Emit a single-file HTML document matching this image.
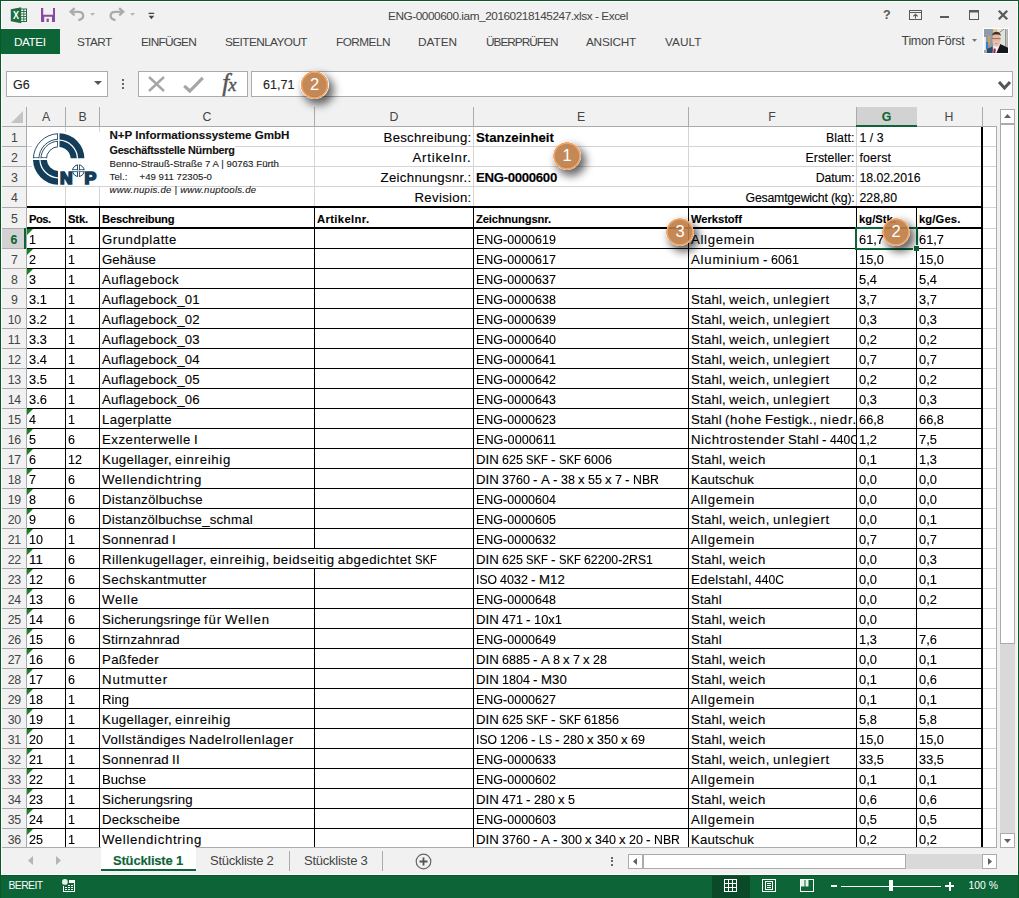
<!DOCTYPE html>
<html lang="de"><head><meta charset="utf-8"><title>ENG-0000600.iam_20160218145247.xlsx - Excel</title>
<style>
html,body{margin:0;padding:0;}
body{width:1019px;height:898px;overflow:hidden;background:#f1f1f1;font-family:"Liberation Sans",sans-serif;color:#000;position:relative;}
.t{position:absolute;white-space:nowrap;-webkit-text-stroke:0.12px currentColor;}
.r{position:absolute;}
.sx{display:inline-block;transform-origin:0 50%;}
.ui{color:#444;-webkit-text-stroke:0;}
svg{position:absolute;overflow:visible;}
</style></head><body>

<!-- sheet -->
<div class="r " style="left:27px;top:127px;width:970px;height:721px;background:#fff;"></div>
<div class="r " style="left:27px;top:146px;width:970px;height:1px;background:#d4d4d4;"></div>
<div class="r " style="left:27px;top:166px;width:970px;height:1px;background:#d4d4d4;"></div>
<div class="r " style="left:27px;top:186px;width:970px;height:1px;background:#d4d4d4;"></div>
<div class="r " style="left:983px;top:207px;width:14px;height:1px;background:#d4d4d4;"></div>
<div class="r " style="left:983px;top:228px;width:14px;height:1px;background:#d4d4d4;"></div>
<div class="r " style="left:983px;top:248px;width:14px;height:1px;background:#d4d4d4;"></div>
<div class="r " style="left:983px;top:268px;width:14px;height:1px;background:#d4d4d4;"></div>
<div class="r " style="left:983px;top:288px;width:14px;height:1px;background:#d4d4d4;"></div>
<div class="r " style="left:983px;top:308px;width:14px;height:1px;background:#d4d4d4;"></div>
<div class="r " style="left:983px;top:328px;width:14px;height:1px;background:#d4d4d4;"></div>
<div class="r " style="left:983px;top:348px;width:14px;height:1px;background:#d4d4d4;"></div>
<div class="r " style="left:983px;top:368px;width:14px;height:1px;background:#d4d4d4;"></div>
<div class="r " style="left:983px;top:388px;width:14px;height:1px;background:#d4d4d4;"></div>
<div class="r " style="left:983px;top:408px;width:14px;height:1px;background:#d4d4d4;"></div>
<div class="r " style="left:983px;top:428px;width:14px;height:1px;background:#d4d4d4;"></div>
<div class="r " style="left:983px;top:448px;width:14px;height:1px;background:#d4d4d4;"></div>
<div class="r " style="left:983px;top:468px;width:14px;height:1px;background:#d4d4d4;"></div>
<div class="r " style="left:983px;top:488px;width:14px;height:1px;background:#d4d4d4;"></div>
<div class="r " style="left:983px;top:508px;width:14px;height:1px;background:#d4d4d4;"></div>
<div class="r " style="left:983px;top:528px;width:14px;height:1px;background:#d4d4d4;"></div>
<div class="r " style="left:983px;top:548px;width:14px;height:1px;background:#d4d4d4;"></div>
<div class="r " style="left:983px;top:568px;width:14px;height:1px;background:#d4d4d4;"></div>
<div class="r " style="left:983px;top:588px;width:14px;height:1px;background:#d4d4d4;"></div>
<div class="r " style="left:983px;top:608px;width:14px;height:1px;background:#d4d4d4;"></div>
<div class="r " style="left:983px;top:628px;width:14px;height:1px;background:#d4d4d4;"></div>
<div class="r " style="left:983px;top:648px;width:14px;height:1px;background:#d4d4d4;"></div>
<div class="r " style="left:983px;top:668px;width:14px;height:1px;background:#d4d4d4;"></div>
<div class="r " style="left:983px;top:688px;width:14px;height:1px;background:#d4d4d4;"></div>
<div class="r " style="left:983px;top:708px;width:14px;height:1px;background:#d4d4d4;"></div>
<div class="r " style="left:983px;top:728px;width:14px;height:1px;background:#d4d4d4;"></div>
<div class="r " style="left:983px;top:748px;width:14px;height:1px;background:#d4d4d4;"></div>
<div class="r " style="left:983px;top:768px;width:14px;height:1px;background:#d4d4d4;"></div>
<div class="r " style="left:983px;top:788px;width:14px;height:1px;background:#d4d4d4;"></div>
<div class="r " style="left:983px;top:808px;width:14px;height:1px;background:#d4d4d4;"></div>
<div class="r " style="left:983px;top:828px;width:14px;height:1px;background:#d4d4d4;"></div>
<div class="r " style="left:983px;top:848px;width:14px;height:1px;background:#d4d4d4;"></div>
<div class="r " style="left:65px;top:127px;width:1px;height:80px;background:#d4d4d4;"></div>
<div class="r " style="left:99px;top:127px;width:1px;height:80px;background:#d4d4d4;"></div>
<div class="r " style="left:314px;top:127px;width:1px;height:80px;background:#d4d4d4;"></div>
<div class="r " style="left:473px;top:127px;width:1px;height:80px;background:#d4d4d4;"></div>
<div class="r " style="left:688px;top:127px;width:1px;height:80px;background:#d4d4d4;"></div>
<div class="r " style="left:856px;top:127px;width:1px;height:80px;background:#d4d4d4;"></div>
<div class="r " style="left:996px;top:127px;width:1px;height:721px;background:#ababab;"></div>
<div class="r " style="left:32px;top:132px;width:68px;height:54px;background:#fff;"></div>
<div class="r " style="left:100px;top:128px;width:135px;height:58px;background:#fff;"></div>
<div class="r " style="left:100px;top:160px;width:117px;height:26px;background:#fff;"></div>
<div class="r " style="left:27px;top:206px;width:956px;height:2px;background:#000;"></div>
<div class="r " style="left:27px;top:227px;width:956px;height:2px;background:#000;"></div>
<div class="r " style="left:27px;top:248px;width:955px;height:1px;background:#000;"></div>
<div class="r " style="left:27px;top:268px;width:955px;height:1px;background:#000;"></div>
<div class="r " style="left:27px;top:288px;width:955px;height:1px;background:#000;"></div>
<div class="r " style="left:27px;top:308px;width:955px;height:1px;background:#000;"></div>
<div class="r " style="left:27px;top:328px;width:955px;height:1px;background:#000;"></div>
<div class="r " style="left:27px;top:348px;width:955px;height:1px;background:#000;"></div>
<div class="r " style="left:27px;top:368px;width:955px;height:1px;background:#000;"></div>
<div class="r " style="left:27px;top:388px;width:955px;height:1px;background:#000;"></div>
<div class="r " style="left:27px;top:408px;width:955px;height:1px;background:#000;"></div>
<div class="r " style="left:27px;top:428px;width:955px;height:1px;background:#000;"></div>
<div class="r " style="left:27px;top:448px;width:955px;height:1px;background:#000;"></div>
<div class="r " style="left:27px;top:468px;width:955px;height:1px;background:#000;"></div>
<div class="r " style="left:27px;top:488px;width:955px;height:1px;background:#000;"></div>
<div class="r " style="left:27px;top:508px;width:955px;height:1px;background:#000;"></div>
<div class="r " style="left:27px;top:528px;width:955px;height:1px;background:#000;"></div>
<div class="r " style="left:27px;top:548px;width:955px;height:1px;background:#000;"></div>
<div class="r " style="left:27px;top:568px;width:955px;height:1px;background:#000;"></div>
<div class="r " style="left:27px;top:588px;width:955px;height:1px;background:#000;"></div>
<div class="r " style="left:27px;top:608px;width:955px;height:1px;background:#000;"></div>
<div class="r " style="left:27px;top:628px;width:955px;height:1px;background:#000;"></div>
<div class="r " style="left:27px;top:648px;width:955px;height:1px;background:#000;"></div>
<div class="r " style="left:27px;top:668px;width:955px;height:1px;background:#000;"></div>
<div class="r " style="left:27px;top:688px;width:955px;height:1px;background:#000;"></div>
<div class="r " style="left:27px;top:708px;width:955px;height:1px;background:#000;"></div>
<div class="r " style="left:27px;top:728px;width:955px;height:1px;background:#000;"></div>
<div class="r " style="left:27px;top:748px;width:955px;height:1px;background:#000;"></div>
<div class="r " style="left:27px;top:768px;width:955px;height:1px;background:#000;"></div>
<div class="r " style="left:27px;top:788px;width:955px;height:1px;background:#000;"></div>
<div class="r " style="left:27px;top:808px;width:955px;height:1px;background:#000;"></div>
<div class="r " style="left:27px;top:828px;width:955px;height:1px;background:#000;"></div>
<div class="r " style="left:27px;top:848px;width:955px;height:1px;background:#000;"></div>
<div class="r " style="left:65px;top:207px;width:1px;height:641px;background:#000;"></div>
<div class="r " style="left:99px;top:207px;width:1px;height:641px;background:#000;"></div>
<div class="r " style="left:314px;top:207px;width:1px;height:641px;background:#000;"></div>
<div class="r " style="left:473px;top:207px;width:1px;height:641px;background:#000;"></div>
<div class="r " style="left:688px;top:207px;width:1px;height:641px;background:#000;"></div>
<div class="r " style="left:856px;top:207px;width:1px;height:641px;background:#000;"></div>
<div class="r " style="left:916px;top:207px;width:1px;height:641px;background:#000;"></div>
<div class="r " style="left:981px;top:127px;width:2px;height:721px;background:#000;"></div>
<div class="r " style="left:314px;top:549px;width:1px;height:19px;background:#fff;"></div>
<!-- cells -->
<div class="t" style="left:29px;top:232.23px;font-size:13.2px;line-height:16px;"><span class="sx" style="transform:scaleX(0.9535);margin-right:-0.341px">1</span></div>
<div class="t" style="left:68px;top:232.23px;font-size:13.2px;line-height:16px;"><span class="sx" style="transform:scaleX(0.9535);margin-right:-0.341px">1</span></div>
<div class="t" style="left:102px;top:232.23px;font-size:13.2px;line-height:16px;"><span style="letter-spacing:0.547px">Grundplatte</span></div>
<div class="t" style="left:476px;top:232.23px;font-size:13.2px;line-height:16px;"><span class="sx" style="transform:scaleX(0.948);margin-right:-4.391px">ENG-0000619</span></div>
<div class="t" style="left:691px;top:232.23px;font-size:13.2px;line-height:16px;"><span style="letter-spacing:0.67px">Allgemein</span></div>
<div class="t" style="left:859px;top:232.23px;font-size:13.2px;line-height:16px;"><span class="sx" style="transform:scaleX(0.9731);margin-right:-0.692px">61,7</span></div>
<div class="t" style="left:919px;top:232.23px;font-size:13.2px;line-height:16px;"><span class="sx" style="transform:scaleX(0.9731);margin-right:-0.692px">61,7</span></div>
<svg style="left:27px;top:229px" width="6" height="6"><path d="M0 0H6L0 6Z" fill="#0f8a1f"/></svg>
<div class="t" style="left:29px;top:252.23px;font-size:13.2px;line-height:16px;"><span class="sx" style="transform:scaleX(0.9535);margin-right:-0.341px">2</span></div>
<div class="t" style="left:68px;top:252.23px;font-size:13.2px;line-height:16px;"><span class="sx" style="transform:scaleX(0.9535);margin-right:-0.341px">1</span></div>
<div class="t" style="left:102px;top:252.23px;font-size:13.2px;line-height:16px;"><span style="letter-spacing:0.061px">Gehäuse</span></div>
<div class="t" style="left:476px;top:252.23px;font-size:13.2px;line-height:16px;"><span class="sx" style="transform:scaleX(0.948);margin-right:-4.391px">ENG-0000617</span></div>
<div class="t" style="left:691px;top:252.23px;font-size:13.2px;line-height:16px;"><span style="letter-spacing:0.82px">Aluminium</span><span style="letter-spacing:-0.667px"> </span><span style="letter-spacing:0.604px">-</span><span style="letter-spacing:-0.667px"> </span><span class="sx" style="transform:scaleX(0.9535);margin-right:-1.366px">6061</span></div>
<div class="t" style="left:859px;top:252.23px;font-size:13.2px;line-height:16px;"><span class="sx" style="transform:scaleX(0.9731);margin-right:-0.692px">15,0</span></div>
<div class="t" style="left:919px;top:252.23px;font-size:13.2px;line-height:16px;"><span class="sx" style="transform:scaleX(0.9731);margin-right:-0.692px">15,0</span></div>
<svg style="left:27px;top:249px" width="6" height="6"><path d="M0 0H6L0 6Z" fill="#0f8a1f"/></svg>
<div class="t" style="left:29px;top:272.23px;font-size:13.2px;line-height:16px;"><span class="sx" style="transform:scaleX(0.9535);margin-right:-0.341px">3</span></div>
<div class="t" style="left:68px;top:272.23px;font-size:13.2px;line-height:16px;"><span class="sx" style="transform:scaleX(0.9535);margin-right:-0.341px">1</span></div>
<div class="t" style="left:102px;top:272.23px;font-size:13.2px;line-height:16px;"><span style="letter-spacing:0.395px">Auflagebock</span></div>
<div class="t" style="left:476px;top:272.23px;font-size:13.2px;line-height:16px;"><span class="sx" style="transform:scaleX(0.948);margin-right:-4.391px">ENG-0000637</span></div>
<div class="t" style="left:859px;top:272.23px;font-size:13.2px;line-height:16px;"><span class="sx" style="transform:scaleX(0.9809);margin-right:-0.35px">5,4</span></div>
<div class="t" style="left:919px;top:272.23px;font-size:13.2px;line-height:16px;"><span class="sx" style="transform:scaleX(0.9809);margin-right:-0.35px">5,4</span></div>
<svg style="left:27px;top:269px" width="6" height="6"><path d="M0 0H6L0 6Z" fill="#0f8a1f"/></svg>
<div class="t" style="left:29px;top:292.23px;font-size:13.2px;line-height:16px;"><span class="sx" style="transform:scaleX(0.9809);margin-right:-0.35px">3.1</span></div>
<div class="t" style="left:68px;top:292.23px;font-size:13.2px;line-height:16px;"><span class="sx" style="transform:scaleX(0.9535);margin-right:-0.341px">1</span></div>
<div class="t" style="left:102px;top:292.23px;font-size:13.2px;line-height:16px;"><span style="letter-spacing:0.237px">Auflagebock_01</span></div>
<div class="t" style="left:476px;top:292.23px;font-size:13.2px;line-height:16px;"><span class="sx" style="transform:scaleX(0.948);margin-right:-4.391px">ENG-0000638</span></div>
<div class="t" style="left:691px;top:292.23px;font-size:13.2px;line-height:16px;"><span style="letter-spacing:0.208px">Stahl,</span><span style="letter-spacing:-0.667px"> </span><span style="letter-spacing:0.597px">weich,</span><span style="letter-spacing:-0.667px"> </span><span style="letter-spacing:0.707px">unlegiert</span></div>
<div class="t" style="left:859px;top:292.23px;font-size:13.2px;line-height:16px;"><span class="sx" style="transform:scaleX(0.9809);margin-right:-0.35px">3,7</span></div>
<div class="t" style="left:919px;top:292.23px;font-size:13.2px;line-height:16px;"><span class="sx" style="transform:scaleX(0.9809);margin-right:-0.35px">3,7</span></div>
<div class="t" style="left:29px;top:312.23px;font-size:13.2px;line-height:16px;"><span class="sx" style="transform:scaleX(0.9809);margin-right:-0.35px">3.2</span></div>
<div class="t" style="left:68px;top:312.23px;font-size:13.2px;line-height:16px;"><span class="sx" style="transform:scaleX(0.9535);margin-right:-0.341px">1</span></div>
<div class="t" style="left:102px;top:312.23px;font-size:13.2px;line-height:16px;"><span style="letter-spacing:0.237px">Auflagebock_02</span></div>
<div class="t" style="left:476px;top:312.23px;font-size:13.2px;line-height:16px;"><span class="sx" style="transform:scaleX(0.948);margin-right:-4.391px">ENG-0000639</span></div>
<div class="t" style="left:691px;top:312.23px;font-size:13.2px;line-height:16px;"><span style="letter-spacing:0.208px">Stahl,</span><span style="letter-spacing:-0.667px"> </span><span style="letter-spacing:0.597px">weich,</span><span style="letter-spacing:-0.667px"> </span><span style="letter-spacing:0.707px">unlegiert</span></div>
<div class="t" style="left:859px;top:312.23px;font-size:13.2px;line-height:16px;"><span class="sx" style="transform:scaleX(0.9809);margin-right:-0.35px">0,3</span></div>
<div class="t" style="left:919px;top:312.23px;font-size:13.2px;line-height:16px;"><span class="sx" style="transform:scaleX(0.9809);margin-right:-0.35px">0,3</span></div>
<div class="t" style="left:29px;top:332.23px;font-size:13.2px;line-height:16px;"><span class="sx" style="transform:scaleX(0.9809);margin-right:-0.35px">3.3</span></div>
<div class="t" style="left:68px;top:332.23px;font-size:13.2px;line-height:16px;"><span class="sx" style="transform:scaleX(0.9535);margin-right:-0.341px">1</span></div>
<div class="t" style="left:102px;top:332.23px;font-size:13.2px;line-height:16px;"><span style="letter-spacing:0.237px">Auflagebock_03</span></div>
<div class="t" style="left:476px;top:332.23px;font-size:13.2px;line-height:16px;"><span class="sx" style="transform:scaleX(0.948);margin-right:-4.391px">ENG-0000640</span></div>
<div class="t" style="left:691px;top:332.23px;font-size:13.2px;line-height:16px;"><span style="letter-spacing:0.208px">Stahl,</span><span style="letter-spacing:-0.667px"> </span><span style="letter-spacing:0.597px">weich,</span><span style="letter-spacing:-0.667px"> </span><span style="letter-spacing:0.707px">unlegiert</span></div>
<div class="t" style="left:859px;top:332.23px;font-size:13.2px;line-height:16px;"><span class="sx" style="transform:scaleX(0.9809);margin-right:-0.35px">0,2</span></div>
<div class="t" style="left:919px;top:332.23px;font-size:13.2px;line-height:16px;"><span class="sx" style="transform:scaleX(0.9809);margin-right:-0.35px">0,2</span></div>
<div class="t" style="left:29px;top:352.23px;font-size:13.2px;line-height:16px;"><span class="sx" style="transform:scaleX(0.9809);margin-right:-0.35px">3.4</span></div>
<div class="t" style="left:68px;top:352.23px;font-size:13.2px;line-height:16px;"><span class="sx" style="transform:scaleX(0.9535);margin-right:-0.341px">1</span></div>
<div class="t" style="left:102px;top:352.23px;font-size:13.2px;line-height:16px;"><span style="letter-spacing:0.237px">Auflagebock_04</span></div>
<div class="t" style="left:476px;top:352.23px;font-size:13.2px;line-height:16px;"><span class="sx" style="transform:scaleX(0.948);margin-right:-4.391px">ENG-0000641</span></div>
<div class="t" style="left:691px;top:352.23px;font-size:13.2px;line-height:16px;"><span style="letter-spacing:0.208px">Stahl,</span><span style="letter-spacing:-0.667px"> </span><span style="letter-spacing:0.597px">weich,</span><span style="letter-spacing:-0.667px"> </span><span style="letter-spacing:0.707px">unlegiert</span></div>
<div class="t" style="left:859px;top:352.23px;font-size:13.2px;line-height:16px;"><span class="sx" style="transform:scaleX(0.9809);margin-right:-0.35px">0,7</span></div>
<div class="t" style="left:919px;top:352.23px;font-size:13.2px;line-height:16px;"><span class="sx" style="transform:scaleX(0.9809);margin-right:-0.35px">0,7</span></div>
<div class="t" style="left:29px;top:372.23px;font-size:13.2px;line-height:16px;"><span class="sx" style="transform:scaleX(0.9809);margin-right:-0.35px">3.5</span></div>
<div class="t" style="left:68px;top:372.23px;font-size:13.2px;line-height:16px;"><span class="sx" style="transform:scaleX(0.9535);margin-right:-0.341px">1</span></div>
<div class="t" style="left:102px;top:372.23px;font-size:13.2px;line-height:16px;"><span style="letter-spacing:0.237px">Auflagebock_05</span></div>
<div class="t" style="left:476px;top:372.23px;font-size:13.2px;line-height:16px;"><span class="sx" style="transform:scaleX(0.948);margin-right:-4.391px">ENG-0000642</span></div>
<div class="t" style="left:691px;top:372.23px;font-size:13.2px;line-height:16px;"><span style="letter-spacing:0.208px">Stahl,</span><span style="letter-spacing:-0.667px"> </span><span style="letter-spacing:0.597px">weich,</span><span style="letter-spacing:-0.667px"> </span><span style="letter-spacing:0.707px">unlegiert</span></div>
<div class="t" style="left:859px;top:372.23px;font-size:13.2px;line-height:16px;"><span class="sx" style="transform:scaleX(0.9809);margin-right:-0.35px">0,2</span></div>
<div class="t" style="left:919px;top:372.23px;font-size:13.2px;line-height:16px;"><span class="sx" style="transform:scaleX(0.9809);margin-right:-0.35px">0,2</span></div>
<div class="t" style="left:29px;top:392.23px;font-size:13.2px;line-height:16px;"><span class="sx" style="transform:scaleX(0.9809);margin-right:-0.35px">3.6</span></div>
<div class="t" style="left:68px;top:392.23px;font-size:13.2px;line-height:16px;"><span class="sx" style="transform:scaleX(0.9535);margin-right:-0.341px">1</span></div>
<div class="t" style="left:102px;top:392.23px;font-size:13.2px;line-height:16px;"><span style="letter-spacing:0.237px">Auflagebock_06</span></div>
<div class="t" style="left:476px;top:392.23px;font-size:13.2px;line-height:16px;"><span class="sx" style="transform:scaleX(0.948);margin-right:-4.391px">ENG-0000643</span></div>
<div class="t" style="left:691px;top:392.23px;font-size:13.2px;line-height:16px;"><span style="letter-spacing:0.208px">Stahl,</span><span style="letter-spacing:-0.667px"> </span><span style="letter-spacing:0.597px">weich,</span><span style="letter-spacing:-0.667px"> </span><span style="letter-spacing:0.707px">unlegiert</span></div>
<div class="t" style="left:859px;top:392.23px;font-size:13.2px;line-height:16px;"><span class="sx" style="transform:scaleX(0.9809);margin-right:-0.35px">0,3</span></div>
<div class="t" style="left:919px;top:392.23px;font-size:13.2px;line-height:16px;"><span class="sx" style="transform:scaleX(0.9809);margin-right:-0.35px">0,3</span></div>
<div class="t" style="left:29px;top:412.23px;font-size:13.2px;line-height:16px;"><span class="sx" style="transform:scaleX(0.9535);margin-right:-0.341px">4</span></div>
<div class="t" style="left:68px;top:412.23px;font-size:13.2px;line-height:16px;"><span class="sx" style="transform:scaleX(0.9535);margin-right:-0.341px">1</span></div>
<div class="t" style="left:102px;top:412.23px;font-size:13.2px;line-height:16px;"><span style="letter-spacing:0.359px">Lagerplatte</span></div>
<div class="t" style="left:476px;top:412.23px;font-size:13.2px;line-height:16px;"><span class="sx" style="transform:scaleX(0.948);margin-right:-4.391px">ENG-0000623</span></div>
<div class="t" style="left:691px;top:412.23px;font-size:13.2px;line-height:16px;width:165px;overflow:hidden;"><span style="letter-spacing:0.182px">Stahl</span><span style="letter-spacing:-0.667px"> </span><span style="letter-spacing:0.648px">(hohe</span><span style="letter-spacing:-0.667px"> </span><span style="letter-spacing:0.235px">Festigk.,</span><span style="letter-spacing:-0.667px"> </span><span style="letter-spacing:0.785px">niedr.</span></div>
<div class="t" style="left:859px;top:412.23px;font-size:13.2px;line-height:16px;"><span class="sx" style="transform:scaleX(0.9731);margin-right:-0.692px">66,8</span></div>
<div class="t" style="left:919px;top:412.23px;font-size:13.2px;line-height:16px;"><span class="sx" style="transform:scaleX(0.9731);margin-right:-0.692px">66,8</span></div>
<svg style="left:27px;top:409px" width="6" height="6"><path d="M0 0H6L0 6Z" fill="#0f8a1f"/></svg>
<div class="t" style="left:29px;top:432.23px;font-size:13.2px;line-height:16px;"><span class="sx" style="transform:scaleX(0.9535);margin-right:-0.341px">5</span></div>
<div class="t" style="left:68px;top:432.23px;font-size:13.2px;line-height:16px;"><span class="sx" style="transform:scaleX(0.9535);margin-right:-0.341px">6</span></div>
<div class="t" style="left:102px;top:432.23px;font-size:13.2px;line-height:16px;"><span style="letter-spacing:0.525px">Exzenterwelle</span><span style="letter-spacing:-0.667px"> </span><span style="letter-spacing:0.333px">I</span></div>
<div class="t" style="left:476px;top:432.23px;font-size:13.2px;line-height:16px;"><span class="sx" style="transform:scaleX(0.9591);margin-right:-3.412px">ENG-0000611</span></div>
<div class="t" style="left:691px;top:432.23px;font-size:13.2px;line-height:16px;width:165px;overflow:hidden;"><span style="letter-spacing:0.583px">Nichtrostender</span><span style="letter-spacing:-0.667px"> </span><span style="letter-spacing:0.182px">Stahl</span><span style="letter-spacing:-0.667px"> </span><span style="letter-spacing:0.604px">-</span><span style="letter-spacing:-0.667px"> </span><span class="sx" style="transform:scaleX(0.919);margin-right:-2.557px">440C</span></div>
<div class="t" style="left:859px;top:432.23px;font-size:13.2px;line-height:16px;"><span class="sx" style="transform:scaleX(0.9809);margin-right:-0.35px">1,2</span></div>
<div class="t" style="left:919px;top:432.23px;font-size:13.2px;line-height:16px;"><span class="sx" style="transform:scaleX(0.9809);margin-right:-0.35px">7,5</span></div>
<svg style="left:27px;top:429px" width="6" height="6"><path d="M0 0H6L0 6Z" fill="#0f8a1f"/></svg>
<div class="t" style="left:29px;top:452.23px;font-size:13.2px;line-height:16px;"><span class="sx" style="transform:scaleX(0.9535);margin-right:-0.341px">6</span></div>
<div class="t" style="left:68px;top:452.23px;font-size:13.2px;line-height:16px;"><span class="sx" style="transform:scaleX(0.9535);margin-right:-0.683px">12</span></div>
<div class="t" style="left:102px;top:452.23px;font-size:13.2px;line-height:16px;"><span style="letter-spacing:0.359px">Kugellager,</span><span style="letter-spacing:-0.667px"> </span><span style="letter-spacing:0.678px">einreihig</span></div>
<div class="t" style="left:476px;top:452.23px;font-size:13.2px;line-height:16px;"><span style="letter-spacing:0.089px">DIN</span><span style="letter-spacing:-0.667px"> </span><span class="sx" style="transform:scaleX(0.9535);margin-right:-1.024px">625</span><span style="letter-spacing:-0.667px"> </span><span class="sx" style="transform:scaleX(0.8569);margin-right:-3.673px">SKF</span><span style="letter-spacing:-0.667px"> </span><span style="letter-spacing:0.604px">-</span><span style="letter-spacing:-0.667px"> </span><span class="sx" style="transform:scaleX(0.8569);margin-right:-3.673px">SKF</span><span style="letter-spacing:-0.667px"> </span><span class="sx" style="transform:scaleX(0.9535);margin-right:-1.366px">6006</span></div>
<div class="t" style="left:691px;top:452.23px;font-size:13.2px;line-height:16px;"><span style="letter-spacing:0.208px">Stahl,</span><span style="letter-spacing:-0.667px"> </span><span style="letter-spacing:0.65px">weich</span></div>
<div class="t" style="left:859px;top:452.23px;font-size:13.2px;line-height:16px;"><span class="sx" style="transform:scaleX(0.9809);margin-right:-0.35px">0,1</span></div>
<div class="t" style="left:919px;top:452.23px;font-size:13.2px;line-height:16px;"><span class="sx" style="transform:scaleX(0.9809);margin-right:-0.35px">1,3</span></div>
<svg style="left:27px;top:449px" width="6" height="6"><path d="M0 0H6L0 6Z" fill="#0f8a1f"/></svg>
<div class="t" style="left:29px;top:472.23px;font-size:13.2px;line-height:16px;"><span class="sx" style="transform:scaleX(0.9535);margin-right:-0.341px">7</span></div>
<div class="t" style="left:68px;top:472.23px;font-size:13.2px;line-height:16px;"><span class="sx" style="transform:scaleX(0.9535);margin-right:-0.341px">6</span></div>
<div class="t" style="left:102px;top:472.23px;font-size:13.2px;line-height:16px;"><span style="letter-spacing:0.666px">Wellendichtring</span></div>
<div class="t" style="left:476px;top:472.23px;font-size:13.2px;line-height:16px;"><span style="letter-spacing:0.089px">DIN</span><span style="letter-spacing:-0.667px"> </span><span class="sx" style="transform:scaleX(0.9535);margin-right:-1.366px">3760</span><span style="letter-spacing:-0.667px"> </span><span style="letter-spacing:0.604px">-</span><span style="letter-spacing:-0.667px"> </span><span style="letter-spacing:0.195px">A</span><span style="letter-spacing:-0.667px"> </span><span style="letter-spacing:0.604px">-</span><span style="letter-spacing:-0.667px"> </span><span class="sx" style="transform:scaleX(0.9535);margin-right:-0.683px">38</span><span style="letter-spacing:-0.667px"> </span><span style="letter-spacing:0.4px">x</span><span style="letter-spacing:-0.667px"> </span><span class="sx" style="transform:scaleX(0.9535);margin-right:-0.683px">55</span><span style="letter-spacing:-0.667px"> </span><span style="letter-spacing:0.4px">x</span><span style="letter-spacing:-0.667px"> </span><span class="sx" style="transform:scaleX(0.9535);margin-right:-0.341px">7</span><span style="letter-spacing:-0.667px"> </span><span style="letter-spacing:0.604px">-</span><span style="letter-spacing:-0.667px"> </span><span class="sx" style="transform:scaleX(0.9329);margin-right:-1.871px">NBR</span></div>
<div class="t" style="left:691px;top:472.23px;font-size:13.2px;line-height:16px;"><span style="letter-spacing:0.151px">Kautschuk</span></div>
<div class="t" style="left:859px;top:472.23px;font-size:13.2px;line-height:16px;"><span class="sx" style="transform:scaleX(0.9809);margin-right:-0.35px">0,0</span></div>
<div class="t" style="left:919px;top:472.23px;font-size:13.2px;line-height:16px;"><span class="sx" style="transform:scaleX(0.9809);margin-right:-0.35px">0,0</span></div>
<svg style="left:27px;top:469px" width="6" height="6"><path d="M0 0H6L0 6Z" fill="#0f8a1f"/></svg>
<div class="t" style="left:29px;top:492.23px;font-size:13.2px;line-height:16px;"><span class="sx" style="transform:scaleX(0.9535);margin-right:-0.341px">8</span></div>
<div class="t" style="left:68px;top:492.23px;font-size:13.2px;line-height:16px;"><span class="sx" style="transform:scaleX(0.9535);margin-right:-0.341px">6</span></div>
<div class="t" style="left:102px;top:492.23px;font-size:13.2px;line-height:16px;"><span style="letter-spacing:0.276px">Distanzölbuchse</span></div>
<div class="t" style="left:476px;top:492.23px;font-size:13.2px;line-height:16px;"><span class="sx" style="transform:scaleX(0.948);margin-right:-4.391px">ENG-0000604</span></div>
<div class="t" style="left:691px;top:492.23px;font-size:13.2px;line-height:16px;"><span style="letter-spacing:0.67px">Allgemein</span></div>
<div class="t" style="left:859px;top:492.23px;font-size:13.2px;line-height:16px;"><span class="sx" style="transform:scaleX(0.9809);margin-right:-0.35px">0,0</span></div>
<div class="t" style="left:919px;top:492.23px;font-size:13.2px;line-height:16px;"><span class="sx" style="transform:scaleX(0.9809);margin-right:-0.35px">0,0</span></div>
<svg style="left:27px;top:489px" width="6" height="6"><path d="M0 0H6L0 6Z" fill="#0f8a1f"/></svg>
<div class="t" style="left:29px;top:512.23px;font-size:13.2px;line-height:16px;"><span class="sx" style="transform:scaleX(0.9535);margin-right:-0.341px">9</span></div>
<div class="t" style="left:68px;top:512.23px;font-size:13.2px;line-height:16px;"><span class="sx" style="transform:scaleX(0.9535);margin-right:-0.341px">6</span></div>
<div class="t" style="left:102px;top:512.23px;font-size:13.2px;line-height:16px;"><span style="letter-spacing:0.227px">Distanzölbuchse_schmal</span></div>
<div class="t" style="left:476px;top:512.23px;font-size:13.2px;line-height:16px;"><span class="sx" style="transform:scaleX(0.948);margin-right:-4.391px">ENG-0000605</span></div>
<div class="t" style="left:691px;top:512.23px;font-size:13.2px;line-height:16px;"><span style="letter-spacing:0.208px">Stahl,</span><span style="letter-spacing:-0.667px"> </span><span style="letter-spacing:0.597px">weich,</span><span style="letter-spacing:-0.667px"> </span><span style="letter-spacing:0.707px">unlegiert</span></div>
<div class="t" style="left:859px;top:512.23px;font-size:13.2px;line-height:16px;"><span class="sx" style="transform:scaleX(0.9809);margin-right:-0.35px">0,0</span></div>
<div class="t" style="left:919px;top:512.23px;font-size:13.2px;line-height:16px;"><span class="sx" style="transform:scaleX(0.9809);margin-right:-0.35px">0,1</span></div>
<svg style="left:27px;top:509px" width="6" height="6"><path d="M0 0H6L0 6Z" fill="#0f8a1f"/></svg>
<div class="t" style="left:29px;top:532.23px;font-size:13.2px;line-height:16px;"><span class="sx" style="transform:scaleX(0.9535);margin-right:-0.683px">10</span></div>
<div class="t" style="left:68px;top:532.23px;font-size:13.2px;line-height:16px;"><span class="sx" style="transform:scaleX(0.9535);margin-right:-0.341px">1</span></div>
<div class="t" style="left:102px;top:532.23px;font-size:13.2px;line-height:16px;"><span style="letter-spacing:0.268px">Sonnenrad</span><span style="letter-spacing:-0.667px"> </span><span style="letter-spacing:0.333px">I</span></div>
<div class="t" style="left:476px;top:532.23px;font-size:13.2px;line-height:16px;"><span class="sx" style="transform:scaleX(0.948);margin-right:-4.391px">ENG-0000632</span></div>
<div class="t" style="left:691px;top:532.23px;font-size:13.2px;line-height:16px;"><span style="letter-spacing:0.67px">Allgemein</span></div>
<div class="t" style="left:859px;top:532.23px;font-size:13.2px;line-height:16px;"><span class="sx" style="transform:scaleX(0.9809);margin-right:-0.35px">0,7</span></div>
<div class="t" style="left:919px;top:532.23px;font-size:13.2px;line-height:16px;"><span class="sx" style="transform:scaleX(0.9809);margin-right:-0.35px">0,7</span></div>
<svg style="left:27px;top:529px" width="6" height="6"><path d="M0 0H6L0 6Z" fill="#0f8a1f"/></svg>
<div class="t" style="left:29px;top:552.23px;font-size:13.2px;line-height:16px;"><span style="letter-spacing:0.148px">11</span></div>
<div class="t" style="left:68px;top:552.23px;font-size:13.2px;line-height:16px;"><span class="sx" style="transform:scaleX(0.9535);margin-right:-0.341px">6</span></div>
<div class="t" style="left:102px;top:552.23px;font-size:13.2px;line-height:16px;"><span style="letter-spacing:0.479px">Rillenkugellager,</span><span style="letter-spacing:-0.667px"> </span><span style="letter-spacing:0.643px">einreihig,</span><span style="letter-spacing:-0.667px"> </span><span style="letter-spacing:0.623px">beidseitig</span><span style="letter-spacing:-0.667px"> </span><span style="letter-spacing:0.522px">abgedichtet</span><span style="letter-spacing:-0.667px"> </span><span class="sx" style="transform:scaleX(0.8569);margin-right:-3.673px">SKF</span></div>
<div class="t" style="left:476px;top:552.23px;font-size:13.2px;line-height:16px;"><span style="letter-spacing:0.089px">DIN</span><span style="letter-spacing:-0.667px"> </span><span class="sx" style="transform:scaleX(0.9535);margin-right:-1.024px">625</span><span style="letter-spacing:-0.667px"> </span><span class="sx" style="transform:scaleX(0.8569);margin-right:-3.673px">SKF</span><span style="letter-spacing:-0.667px"> </span><span style="letter-spacing:0.604px">-</span><span style="letter-spacing:-0.667px"> </span><span class="sx" style="transform:scaleX(0.8569);margin-right:-3.673px">SKF</span><span style="letter-spacing:-0.667px"> </span><span class="sx" style="transform:scaleX(0.9309);margin-right:-5.124px">62200-2RS1</span></div>
<div class="t" style="left:691px;top:552.23px;font-size:13.2px;line-height:16px;"><span style="letter-spacing:0.208px">Stahl,</span><span style="letter-spacing:-0.667px"> </span><span style="letter-spacing:0.65px">weich</span></div>
<div class="t" style="left:859px;top:552.23px;font-size:13.2px;line-height:16px;"><span class="sx" style="transform:scaleX(0.9809);margin-right:-0.35px">0,0</span></div>
<div class="t" style="left:919px;top:552.23px;font-size:13.2px;line-height:16px;"><span class="sx" style="transform:scaleX(0.9809);margin-right:-0.35px">0,3</span></div>
<svg style="left:27px;top:549px" width="6" height="6"><path d="M0 0H6L0 6Z" fill="#0f8a1f"/></svg>
<div class="t" style="left:29px;top:572.23px;font-size:13.2px;line-height:16px;"><span class="sx" style="transform:scaleX(0.9535);margin-right:-0.683px">12</span></div>
<div class="t" style="left:68px;top:572.23px;font-size:13.2px;line-height:16px;"><span class="sx" style="transform:scaleX(0.9535);margin-right:-0.341px">6</span></div>
<div class="t" style="left:102px;top:572.23px;font-size:13.2px;line-height:16px;"><span style="letter-spacing:0.397px">Sechskantmutter</span></div>
<div class="t" style="left:476px;top:572.23px;font-size:13.2px;line-height:16px;"><span class="sx" style="transform:scaleX(0.9235);margin-right:-1.739px">ISO</span><span style="letter-spacing:-0.667px"> </span><span class="sx" style="transform:scaleX(0.9535);margin-right:-1.366px">4032</span><span style="letter-spacing:-0.667px"> </span><span style="letter-spacing:0.604px">-</span><span style="letter-spacing:-0.667px"> </span><span style="letter-spacing:0.107px">M12</span></div>
<div class="t" style="left:691px;top:572.23px;font-size:13.2px;line-height:16px;"><span style="letter-spacing:0.303px">Edelstahl,</span><span style="letter-spacing:-0.667px"> </span><span class="sx" style="transform:scaleX(0.919);margin-right:-2.557px">440C</span></div>
<div class="t" style="left:859px;top:572.23px;font-size:13.2px;line-height:16px;"><span class="sx" style="transform:scaleX(0.9809);margin-right:-0.35px">0,0</span></div>
<div class="t" style="left:919px;top:572.23px;font-size:13.2px;line-height:16px;"><span class="sx" style="transform:scaleX(0.9809);margin-right:-0.35px">0,1</span></div>
<svg style="left:27px;top:569px" width="6" height="6"><path d="M0 0H6L0 6Z" fill="#0f8a1f"/></svg>
<div class="t" style="left:29px;top:592.23px;font-size:13.2px;line-height:16px;"><span class="sx" style="transform:scaleX(0.9535);margin-right:-0.683px">13</span></div>
<div class="t" style="left:68px;top:592.23px;font-size:13.2px;line-height:16px;"><span class="sx" style="transform:scaleX(0.9535);margin-right:-0.341px">6</span></div>
<div class="t" style="left:102px;top:592.23px;font-size:13.2px;line-height:16px;"><span style="letter-spacing:0.846px">Welle</span></div>
<div class="t" style="left:476px;top:592.23px;font-size:13.2px;line-height:16px;"><span class="sx" style="transform:scaleX(0.948);margin-right:-4.391px">ENG-0000648</span></div>
<div class="t" style="left:691px;top:592.23px;font-size:13.2px;line-height:16px;"><span style="letter-spacing:0.182px">Stahl</span></div>
<div class="t" style="left:859px;top:592.23px;font-size:13.2px;line-height:16px;"><span class="sx" style="transform:scaleX(0.9809);margin-right:-0.35px">0,0</span></div>
<div class="t" style="left:919px;top:592.23px;font-size:13.2px;line-height:16px;"><span class="sx" style="transform:scaleX(0.9809);margin-right:-0.35px">0,2</span></div>
<svg style="left:27px;top:589px" width="6" height="6"><path d="M0 0H6L0 6Z" fill="#0f8a1f"/></svg>
<div class="t" style="left:29px;top:612.23px;font-size:13.2px;line-height:16px;"><span class="sx" style="transform:scaleX(0.9535);margin-right:-0.683px">14</span></div>
<div class="t" style="left:68px;top:612.23px;font-size:13.2px;line-height:16px;"><span class="sx" style="transform:scaleX(0.9535);margin-right:-0.341px">6</span></div>
<div class="t" style="left:102px;top:612.23px;font-size:13.2px;line-height:16px;"><span style="letter-spacing:0.24px">Sicherungsringe</span><span style="letter-spacing:-0.667px"> </span><span style="letter-spacing:0.865px">für</span><span style="letter-spacing:-0.667px"> </span><span style="letter-spacing:0.815px">Wellen</span></div>
<div class="t" style="left:476px;top:612.23px;font-size:13.2px;line-height:16px;"><span style="letter-spacing:0.089px">DIN</span><span style="letter-spacing:-0.667px"> </span><span class="sx" style="transform:scaleX(0.9535);margin-right:-1.024px">471</span><span style="letter-spacing:-0.667px"> </span><span style="letter-spacing:0.604px">-</span><span style="letter-spacing:-0.667px"> </span><span class="sx" style="transform:scaleX(0.9782);margin-right:-0.624px">10x1</span></div>
<div class="t" style="left:691px;top:612.23px;font-size:13.2px;line-height:16px;"><span style="letter-spacing:0.208px">Stahl,</span><span style="letter-spacing:-0.667px"> </span><span style="letter-spacing:0.65px">weich</span></div>
<div class="t" style="left:859px;top:612.23px;font-size:13.2px;line-height:16px;"><span class="sx" style="transform:scaleX(0.9809);margin-right:-0.35px">0,0</span></div>
<svg style="left:27px;top:609px" width="6" height="6"><path d="M0 0H6L0 6Z" fill="#0f8a1f"/></svg>
<div class="t" style="left:29px;top:632.23px;font-size:13.2px;line-height:16px;"><span class="sx" style="transform:scaleX(0.9535);margin-right:-0.683px">15</span></div>
<div class="t" style="left:68px;top:632.23px;font-size:13.2px;line-height:16px;"><span class="sx" style="transform:scaleX(0.9535);margin-right:-0.341px">6</span></div>
<div class="t" style="left:102px;top:632.23px;font-size:13.2px;line-height:16px;"><span style="letter-spacing:0.263px">Stirnzahnrad</span></div>
<div class="t" style="left:476px;top:632.23px;font-size:13.2px;line-height:16px;"><span class="sx" style="transform:scaleX(0.948);margin-right:-4.391px">ENG-0000649</span></div>
<div class="t" style="left:691px;top:632.23px;font-size:13.2px;line-height:16px;"><span style="letter-spacing:0.182px">Stahl</span></div>
<div class="t" style="left:859px;top:632.23px;font-size:13.2px;line-height:16px;"><span class="sx" style="transform:scaleX(0.9809);margin-right:-0.35px">1,3</span></div>
<div class="t" style="left:919px;top:632.23px;font-size:13.2px;line-height:16px;"><span class="sx" style="transform:scaleX(0.9809);margin-right:-0.35px">7,6</span></div>
<svg style="left:27px;top:629px" width="6" height="6"><path d="M0 0H6L0 6Z" fill="#0f8a1f"/></svg>
<div class="t" style="left:29px;top:652.23px;font-size:13.2px;line-height:16px;"><span class="sx" style="transform:scaleX(0.9535);margin-right:-0.683px">16</span></div>
<div class="t" style="left:68px;top:652.23px;font-size:13.2px;line-height:16px;"><span class="sx" style="transform:scaleX(0.9535);margin-right:-0.341px">6</span></div>
<div class="t" style="left:102px;top:652.23px;font-size:13.2px;line-height:16px;"><span style="letter-spacing:0.338px">Paßfeder</span></div>
<div class="t" style="left:476px;top:652.23px;font-size:13.2px;line-height:16px;"><span style="letter-spacing:0.089px">DIN</span><span style="letter-spacing:-0.667px"> </span><span class="sx" style="transform:scaleX(0.9535);margin-right:-1.366px">6885</span><span style="letter-spacing:-0.667px"> </span><span style="letter-spacing:0.604px">-</span><span style="letter-spacing:-0.667px"> </span><span style="letter-spacing:0.195px">A</span><span style="letter-spacing:-0.667px"> </span><span class="sx" style="transform:scaleX(0.9535);margin-right:-0.341px">8</span><span style="letter-spacing:-0.667px"> </span><span style="letter-spacing:0.4px">x</span><span style="letter-spacing:-0.667px"> </span><span class="sx" style="transform:scaleX(0.9535);margin-right:-0.341px">7</span><span style="letter-spacing:-0.667px"> </span><span style="letter-spacing:0.4px">x</span><span style="letter-spacing:-0.667px"> </span><span class="sx" style="transform:scaleX(0.9535);margin-right:-0.683px">28</span></div>
<div class="t" style="left:691px;top:652.23px;font-size:13.2px;line-height:16px;"><span style="letter-spacing:0.208px">Stahl,</span><span style="letter-spacing:-0.667px"> </span><span style="letter-spacing:0.65px">weich</span></div>
<div class="t" style="left:859px;top:652.23px;font-size:13.2px;line-height:16px;"><span class="sx" style="transform:scaleX(0.9809);margin-right:-0.35px">0,0</span></div>
<div class="t" style="left:919px;top:652.23px;font-size:13.2px;line-height:16px;"><span class="sx" style="transform:scaleX(0.9809);margin-right:-0.35px">0,1</span></div>
<svg style="left:27px;top:649px" width="6" height="6"><path d="M0 0H6L0 6Z" fill="#0f8a1f"/></svg>
<div class="t" style="left:29px;top:672.23px;font-size:13.2px;line-height:16px;"><span class="sx" style="transform:scaleX(0.9535);margin-right:-0.683px">17</span></div>
<div class="t" style="left:68px;top:672.23px;font-size:13.2px;line-height:16px;"><span class="sx" style="transform:scaleX(0.9535);margin-right:-0.341px">6</span></div>
<div class="t" style="left:102px;top:672.23px;font-size:13.2px;line-height:16px;"><span style="letter-spacing:0.894px">Nutmutter</span></div>
<div class="t" style="left:476px;top:672.23px;font-size:13.2px;line-height:16px;"><span style="letter-spacing:0.089px">DIN</span><span style="letter-spacing:-0.667px"> </span><span class="sx" style="transform:scaleX(0.9535);margin-right:-1.366px">1804</span><span style="letter-spacing:-0.667px"> </span><span style="letter-spacing:0.604px">-</span><span style="letter-spacing:-0.667px"> </span><span style="letter-spacing:0.107px">M30</span></div>
<div class="t" style="left:691px;top:672.23px;font-size:13.2px;line-height:16px;"><span style="letter-spacing:0.208px">Stahl,</span><span style="letter-spacing:-0.667px"> </span><span style="letter-spacing:0.65px">weich</span></div>
<div class="t" style="left:859px;top:672.23px;font-size:13.2px;line-height:16px;"><span class="sx" style="transform:scaleX(0.9809);margin-right:-0.35px">0,1</span></div>
<div class="t" style="left:919px;top:672.23px;font-size:13.2px;line-height:16px;"><span class="sx" style="transform:scaleX(0.9809);margin-right:-0.35px">0,6</span></div>
<svg style="left:27px;top:669px" width="6" height="6"><path d="M0 0H6L0 6Z" fill="#0f8a1f"/></svg>
<div class="t" style="left:29px;top:692.23px;font-size:13.2px;line-height:16px;"><span class="sx" style="transform:scaleX(0.9535);margin-right:-0.683px">18</span></div>
<div class="t" style="left:68px;top:692.23px;font-size:13.2px;line-height:16px;"><span class="sx" style="transform:scaleX(0.9535);margin-right:-0.341px">1</span></div>
<div class="t" style="left:102px;top:692.23px;font-size:13.2px;line-height:16px;"><span class="sx" style="transform:scaleX(0.9945);margin-right:-0.149px">Ring</span></div>
<div class="t" style="left:476px;top:692.23px;font-size:13.2px;line-height:16px;"><span class="sx" style="transform:scaleX(0.948);margin-right:-4.391px">ENG-0000627</span></div>
<div class="t" style="left:691px;top:692.23px;font-size:13.2px;line-height:16px;"><span style="letter-spacing:0.67px">Allgemein</span></div>
<div class="t" style="left:859px;top:692.23px;font-size:13.2px;line-height:16px;"><span class="sx" style="transform:scaleX(0.9809);margin-right:-0.35px">0,1</span></div>
<div class="t" style="left:919px;top:692.23px;font-size:13.2px;line-height:16px;"><span class="sx" style="transform:scaleX(0.9809);margin-right:-0.35px">0,1</span></div>
<svg style="left:27px;top:689px" width="6" height="6"><path d="M0 0H6L0 6Z" fill="#0f8a1f"/></svg>
<div class="t" style="left:29px;top:712.23px;font-size:13.2px;line-height:16px;"><span class="sx" style="transform:scaleX(0.9535);margin-right:-0.683px">19</span></div>
<div class="t" style="left:68px;top:712.23px;font-size:13.2px;line-height:16px;"><span class="sx" style="transform:scaleX(0.9535);margin-right:-0.341px">1</span></div>
<div class="t" style="left:102px;top:712.23px;font-size:13.2px;line-height:16px;"><span style="letter-spacing:0.359px">Kugellager,</span><span style="letter-spacing:-0.667px"> </span><span style="letter-spacing:0.678px">einreihig</span></div>
<div class="t" style="left:476px;top:712.23px;font-size:13.2px;line-height:16px;"><span style="letter-spacing:0.089px">DIN</span><span style="letter-spacing:-0.667px"> </span><span class="sx" style="transform:scaleX(0.9535);margin-right:-1.024px">625</span><span style="letter-spacing:-0.667px"> </span><span class="sx" style="transform:scaleX(0.8569);margin-right:-3.673px">SKF</span><span style="letter-spacing:-0.667px"> </span><span style="letter-spacing:0.604px">-</span><span style="letter-spacing:-0.667px"> </span><span class="sx" style="transform:scaleX(0.8569);margin-right:-3.673px">SKF</span><span style="letter-spacing:-0.667px"> </span><span class="sx" style="transform:scaleX(0.9535);margin-right:-1.707px">61856</span></div>
<div class="t" style="left:691px;top:712.23px;font-size:13.2px;line-height:16px;"><span style="letter-spacing:0.208px">Stahl,</span><span style="letter-spacing:-0.667px"> </span><span style="letter-spacing:0.65px">weich</span></div>
<div class="t" style="left:859px;top:712.23px;font-size:13.2px;line-height:16px;"><span class="sx" style="transform:scaleX(0.9809);margin-right:-0.35px">5,8</span></div>
<div class="t" style="left:919px;top:712.23px;font-size:13.2px;line-height:16px;"><span class="sx" style="transform:scaleX(0.9809);margin-right:-0.35px">5,8</span></div>
<svg style="left:27px;top:709px" width="6" height="6"><path d="M0 0H6L0 6Z" fill="#0f8a1f"/></svg>
<div class="t" style="left:29px;top:732.23px;font-size:13.2px;line-height:16px;"><span class="sx" style="transform:scaleX(0.9535);margin-right:-0.683px">20</span></div>
<div class="t" style="left:68px;top:732.23px;font-size:13.2px;line-height:16px;"><span class="sx" style="transform:scaleX(0.9535);margin-right:-0.341px">1</span></div>
<div class="t" style="left:102px;top:732.23px;font-size:13.2px;line-height:16px;"><span style="letter-spacing:0.478px">Vollständiges</span><span style="letter-spacing:-0.667px"> </span><span style="letter-spacing:0.554px">Nadelrollenlager</span></div>
<div class="t" style="left:476px;top:732.23px;font-size:13.2px;line-height:16px;"><span class="sx" style="transform:scaleX(0.9235);margin-right:-1.739px">ISO</span><span style="letter-spacing:-0.667px"> </span><span class="sx" style="transform:scaleX(0.9535);margin-right:-1.366px">1206</span><span style="letter-spacing:-0.667px"> </span><span style="letter-spacing:0.604px">-</span><span style="letter-spacing:-0.667px"> </span><span class="sx" style="transform:scaleX(0.8051);margin-right:-3.146px">LS</span><span style="letter-spacing:-0.667px"> </span><span style="letter-spacing:0.604px">-</span><span style="letter-spacing:-0.667px"> </span><span class="sx" style="transform:scaleX(0.9535);margin-right:-1.024px">280</span><span style="letter-spacing:-0.667px"> </span><span style="letter-spacing:0.4px">x</span><span style="letter-spacing:-0.667px"> </span><span class="sx" style="transform:scaleX(0.9535);margin-right:-1.024px">350</span><span style="letter-spacing:-0.667px"> </span><span style="letter-spacing:0.4px">x</span><span style="letter-spacing:-0.667px"> </span><span class="sx" style="transform:scaleX(0.9535);margin-right:-0.683px">69</span></div>
<div class="t" style="left:691px;top:732.23px;font-size:13.2px;line-height:16px;"><span style="letter-spacing:0.208px">Stahl,</span><span style="letter-spacing:-0.667px"> </span><span style="letter-spacing:0.65px">weich</span></div>
<div class="t" style="left:859px;top:732.23px;font-size:13.2px;line-height:16px;"><span class="sx" style="transform:scaleX(0.9731);margin-right:-0.692px">15,0</span></div>
<div class="t" style="left:919px;top:732.23px;font-size:13.2px;line-height:16px;"><span class="sx" style="transform:scaleX(0.9731);margin-right:-0.692px">15,0</span></div>
<svg style="left:27px;top:729px" width="6" height="6"><path d="M0 0H6L0 6Z" fill="#0f8a1f"/></svg>
<div class="t" style="left:29px;top:752.23px;font-size:13.2px;line-height:16px;"><span class="sx" style="transform:scaleX(0.9535);margin-right:-0.683px">21</span></div>
<div class="t" style="left:68px;top:752.23px;font-size:13.2px;line-height:16px;"><span class="sx" style="transform:scaleX(0.9535);margin-right:-0.341px">1</span></div>
<div class="t" style="left:102px;top:752.23px;font-size:13.2px;line-height:16px;"><span style="letter-spacing:0.268px">Sonnenrad</span><span style="letter-spacing:-0.667px"> </span><span style="letter-spacing:0.333px">II</span></div>
<div class="t" style="left:476px;top:752.23px;font-size:13.2px;line-height:16px;"><span class="sx" style="transform:scaleX(0.948);margin-right:-4.391px">ENG-0000633</span></div>
<div class="t" style="left:691px;top:752.23px;font-size:13.2px;line-height:16px;"><span style="letter-spacing:0.208px">Stahl,</span><span style="letter-spacing:-0.667px"> </span><span style="letter-spacing:0.597px">weich,</span><span style="letter-spacing:-0.667px"> </span><span style="letter-spacing:0.707px">unlegiert</span></div>
<div class="t" style="left:859px;top:752.23px;font-size:13.2px;line-height:16px;"><span class="sx" style="transform:scaleX(0.9731);margin-right:-0.692px">33,5</span></div>
<div class="t" style="left:919px;top:752.23px;font-size:13.2px;line-height:16px;"><span class="sx" style="transform:scaleX(0.9731);margin-right:-0.692px">33,5</span></div>
<svg style="left:27px;top:749px" width="6" height="6"><path d="M0 0H6L0 6Z" fill="#0f8a1f"/></svg>
<div class="t" style="left:29px;top:772.23px;font-size:13.2px;line-height:16px;"><span class="sx" style="transform:scaleX(0.9535);margin-right:-0.683px">22</span></div>
<div class="t" style="left:68px;top:772.23px;font-size:13.2px;line-height:16px;"><span class="sx" style="transform:scaleX(0.9535);margin-right:-0.341px">1</span></div>
<div class="t" style="left:102px;top:772.23px;font-size:13.2px;line-height:16px;"><span class="sx" style="transform:scaleX(0.9993);margin-right:-0.029px">Buchse</span></div>
<div class="t" style="left:476px;top:772.23px;font-size:13.2px;line-height:16px;"><span class="sx" style="transform:scaleX(0.948);margin-right:-4.391px">ENG-0000602</span></div>
<div class="t" style="left:691px;top:772.23px;font-size:13.2px;line-height:16px;"><span style="letter-spacing:0.67px">Allgemein</span></div>
<div class="t" style="left:859px;top:772.23px;font-size:13.2px;line-height:16px;"><span class="sx" style="transform:scaleX(0.9809);margin-right:-0.35px">0,1</span></div>
<div class="t" style="left:919px;top:772.23px;font-size:13.2px;line-height:16px;"><span class="sx" style="transform:scaleX(0.9809);margin-right:-0.35px">0,1</span></div>
<svg style="left:27px;top:769px" width="6" height="6"><path d="M0 0H6L0 6Z" fill="#0f8a1f"/></svg>
<div class="t" style="left:29px;top:792.23px;font-size:13.2px;line-height:16px;"><span class="sx" style="transform:scaleX(0.9535);margin-right:-0.683px">23</span></div>
<div class="t" style="left:68px;top:792.23px;font-size:13.2px;line-height:16px;"><span class="sx" style="transform:scaleX(0.9535);margin-right:-0.341px">1</span></div>
<div class="t" style="left:102px;top:792.23px;font-size:13.2px;line-height:16px;"><span style="letter-spacing:0.21px">Sicherungsring</span></div>
<div class="t" style="left:476px;top:792.23px;font-size:13.2px;line-height:16px;"><span style="letter-spacing:0.089px">DIN</span><span style="letter-spacing:-0.667px"> </span><span class="sx" style="transform:scaleX(0.9535);margin-right:-1.024px">471</span><span style="letter-spacing:-0.667px"> </span><span style="letter-spacing:0.604px">-</span><span style="letter-spacing:-0.667px"> </span><span class="sx" style="transform:scaleX(0.9535);margin-right:-1.024px">280</span><span style="letter-spacing:-0.667px"> </span><span style="letter-spacing:0.4px">x</span><span style="letter-spacing:-0.667px"> </span><span class="sx" style="transform:scaleX(0.9535);margin-right:-0.341px">5</span></div>
<div class="t" style="left:691px;top:792.23px;font-size:13.2px;line-height:16px;"><span style="letter-spacing:0.208px">Stahl,</span><span style="letter-spacing:-0.667px"> </span><span style="letter-spacing:0.65px">weich</span></div>
<div class="t" style="left:859px;top:792.23px;font-size:13.2px;line-height:16px;"><span class="sx" style="transform:scaleX(0.9809);margin-right:-0.35px">0,6</span></div>
<div class="t" style="left:919px;top:792.23px;font-size:13.2px;line-height:16px;"><span class="sx" style="transform:scaleX(0.9809);margin-right:-0.35px">0,6</span></div>
<svg style="left:27px;top:789px" width="6" height="6"><path d="M0 0H6L0 6Z" fill="#0f8a1f"/></svg>
<div class="t" style="left:29px;top:812.23px;font-size:13.2px;line-height:16px;"><span class="sx" style="transform:scaleX(0.9535);margin-right:-0.683px">24</span></div>
<div class="t" style="left:68px;top:812.23px;font-size:13.2px;line-height:16px;"><span class="sx" style="transform:scaleX(0.9535);margin-right:-0.341px">1</span></div>
<div class="t" style="left:102px;top:812.23px;font-size:13.2px;line-height:16px;"><span style="letter-spacing:0.221px">Deckscheibe</span></div>
<div class="t" style="left:476px;top:812.23px;font-size:13.2px;line-height:16px;"><span class="sx" style="transform:scaleX(0.948);margin-right:-4.391px">ENG-0000603</span></div>
<div class="t" style="left:691px;top:812.23px;font-size:13.2px;line-height:16px;"><span style="letter-spacing:0.67px">Allgemein</span></div>
<div class="t" style="left:859px;top:812.23px;font-size:13.2px;line-height:16px;"><span class="sx" style="transform:scaleX(0.9809);margin-right:-0.35px">0,5</span></div>
<div class="t" style="left:919px;top:812.23px;font-size:13.2px;line-height:16px;"><span class="sx" style="transform:scaleX(0.9809);margin-right:-0.35px">0,5</span></div>
<svg style="left:27px;top:809px" width="6" height="6"><path d="M0 0H6L0 6Z" fill="#0f8a1f"/></svg>
<div class="t" style="left:29px;top:832.23px;font-size:13.2px;line-height:16px;"><span class="sx" style="transform:scaleX(0.9535);margin-right:-0.683px">25</span></div>
<div class="t" style="left:68px;top:832.23px;font-size:13.2px;line-height:16px;"><span class="sx" style="transform:scaleX(0.9535);margin-right:-0.341px">1</span></div>
<div class="t" style="left:102px;top:832.23px;font-size:13.2px;line-height:16px;"><span style="letter-spacing:0.666px">Wellendichtring</span></div>
<div class="t" style="left:476px;top:832.23px;font-size:13.2px;line-height:16px;"><span style="letter-spacing:0.089px">DIN</span><span style="letter-spacing:-0.667px"> </span><span class="sx" style="transform:scaleX(0.9535);margin-right:-1.366px">3760</span><span style="letter-spacing:-0.667px"> </span><span style="letter-spacing:0.604px">-</span><span style="letter-spacing:-0.667px"> </span><span style="letter-spacing:0.195px">A</span><span style="letter-spacing:-0.667px"> </span><span style="letter-spacing:0.604px">-</span><span style="letter-spacing:-0.667px"> </span><span class="sx" style="transform:scaleX(0.9535);margin-right:-1.024px">300</span><span style="letter-spacing:-0.667px"> </span><span style="letter-spacing:0.4px">x</span><span style="letter-spacing:-0.667px"> </span><span class="sx" style="transform:scaleX(0.9535);margin-right:-1.024px">340</span><span style="letter-spacing:-0.667px"> </span><span style="letter-spacing:0.4px">x</span><span style="letter-spacing:-0.667px"> </span><span class="sx" style="transform:scaleX(0.9535);margin-right:-0.683px">20</span><span style="letter-spacing:-0.667px"> </span><span style="letter-spacing:0.604px">-</span><span style="letter-spacing:-0.667px"> </span><span class="sx" style="transform:scaleX(0.9329);margin-right:-1.871px">NBR</span></div>
<div class="t" style="left:691px;top:832.23px;font-size:13.2px;line-height:16px;"><span style="letter-spacing:0.151px">Kautschuk</span></div>
<div class="t" style="left:859px;top:832.23px;font-size:13.2px;line-height:16px;"><span class="sx" style="transform:scaleX(0.9809);margin-right:-0.35px">0,2</span></div>
<div class="t" style="left:919px;top:832.23px;font-size:13.2px;line-height:16px;"><span class="sx" style="transform:scaleX(0.9809);margin-right:-0.35px">0,2</span></div>
<svg style="left:27px;top:829px" width="6" height="6"><path d="M0 0H6L0 6Z" fill="#0f8a1f"/></svg>
<!-- table header row -->
<div class="t " style="letter-spacing:-0.538px;left:29px;top:212.62px;font-size:11.2px;line-height:13px;font-weight:bold;">Pos.</div>
<div class="t " style="letter-spacing:-0.135px;left:68px;top:212.62px;font-size:11.2px;line-height:13px;font-weight:bold;">Stk.</div>
<div class="t " style="letter-spacing:-0.182px;left:102px;top:212.62px;font-size:11.2px;line-height:13px;font-weight:bold;">Beschreibung</div>
<div class="t " style="letter-spacing:0.395px;left:317px;top:212.62px;font-size:11.2px;line-height:13px;font-weight:bold;">Artikelnr.</div>
<div class="t " style="letter-spacing:-0.119px;left:476px;top:212.62px;font-size:11.2px;line-height:13px;font-weight:bold;">Zeichnungsnr.</div>
<div class="t " style="letter-spacing:-0.05px;left:691px;top:212.62px;font-size:11.2px;line-height:13px;font-weight:bold;">Werkstoff</div>
<div class="t " style="letter-spacing:0.039px;left:859px;top:212.62px;font-size:11.2px;line-height:13px;font-weight:bold;">kg/Stk.</div>
<div class="t " style="letter-spacing:0.148px;left:919px;top:212.62px;font-size:11.2px;line-height:13px;font-weight:bold;">kg/Ges.</div>
<!-- info block -->
<div class="t " style="letter-spacing:0.278px;right:547.5px;top:130.43px;font-size:13.2px;line-height:16px;">Beschreibung:</div>
<div class="t " style="letter-spacing:0.765px;right:547.5px;top:150.43px;font-size:13.2px;line-height:16px;">Artikelnr.</div>
<div class="t " style="letter-spacing:0.315px;right:547.5px;top:170.43px;font-size:13.2px;line-height:16px;">Zeichnungsnr.:</div>
<div class="t " style="letter-spacing:0.301px;right:547.5px;top:190.43px;font-size:13.2px;line-height:16px;">Revision:</div>
<div class="t " style="letter-spacing:0.021px;left:476px;top:130.43px;font-size:13.2px;line-height:16px;font-weight:bold;">Stanzeinheit</div>
<div class="t " style="letter-spacing:-0.308px;left:476px;top:170.43px;font-size:13.2px;line-height:16px;font-weight:bold;">ENG-0000600</div>
<div class="t " style="letter-spacing:0.095px;right:164.5px;top:131.24px;font-size:12.3px;line-height:15px;">Blatt:</div>
<div class="t " style="letter-spacing:0.047px;right:164.5px;top:151.24px;font-size:12.3px;line-height:15px;">Ersteller:</div>
<div class="t " style="letter-spacing:-0.141px;right:164.5px;top:171.24px;font-size:12.3px;line-height:15px;">Datum:</div>
<div class="t " style="letter-spacing:-0.199px;right:164.5px;top:191.24px;font-size:12.3px;line-height:15px;">Gesamtgewicht (kg):</div>
<div class="t " style="letter-spacing:0.013px;left:859.5px;top:131.24px;font-size:12.3px;line-height:15px;">1 / 3</div>
<div class="t " style="letter-spacing:0.156px;left:859.5px;top:151.24px;font-size:12.3px;line-height:15px;">foerst</div>
<div class="t " style="letter-spacing:-0.056px;left:859.5px;top:171.24px;font-size:12.3px;line-height:15px;">18.02.2016</div>
<div class="t " style="letter-spacing:-0.02px;left:859.5px;top:191.24px;font-size:12.3px;line-height:15px;">228,80</div>
<!-- company -->
<div class="t " style="letter-spacing:-0.022px;left:109.5px;top:128.28px;font-size:11.6px;line-height:14px;font-weight:bold;color:#111;">N+P Informationssysteme GmbH</div>
<div class="t " style="letter-spacing:-0.268px;left:109.5px;top:144.06px;font-size:10.8px;line-height:13px;font-weight:bold;color:#111;">Geschäftsstelle Nürnberg</div>
<div class="t " style="letter-spacing:0.057px;left:109.5px;top:157.67px;font-size:9.6px;line-height:12px;color:#222;">Benno-Strauß-Straße 7 A | 90763 Fürth</div>
<div class="t " style="letter-spacing:0.079px;left:109.5px;top:170.67px;font-size:9.6px;line-height:12px;color:#222;">Tel.:</div>
<div class="t " style="letter-spacing:0.023px;left:139.5px;top:170.67px;font-size:9.6px;line-height:12px;color:#222;">+49 911 72305-0</div>
<div class="t " style="letter-spacing:0.245px;left:109.5px;top:183.87px;font-size:9.6px;line-height:12px;font-style:italic;color:#222;">www.nupis.de | www.nuptools.de</div>
<!-- logo -->
<svg style="left:26px;top:126px" width="80" height="66" viewBox="26 126 80 66">
<defs>
<clipPath id="qtr"><rect x="59.5" y="130" width="30" height="28.2"/></clipPath>
<clipPath id="qbl"><rect x="30" y="159.9" width="27.9" height="30"/></clipPath>
<clipPath id="qtl"><rect x="30" y="130" width="27.9" height="28.2"/></clipPath>
</defs>
<g fill="none" stroke="#143d59">
<g clip-path="url(#qtr)" stroke-width="6.3"><circle cx="58.7" cy="159" r="22.55"/><circle cx="58.7" cy="159" r="15.05"/></g>
<g clip-path="url(#qbl)" stroke-width="6.3"><circle cx="58.7" cy="159" r="22.55"/><circle cx="58.7" cy="159" r="15.05"/></g>
<g clip-path="url(#qtl)" stroke-width="0.9">
<circle cx="58.7" cy="159" r="25.3"/><circle cx="58.7" cy="159" r="19.8"/><circle cx="58.7" cy="159" r="17.8"/><circle cx="58.7" cy="159" r="12.3"/>
<path d="M33.4 157.8H38.9M40.9 157.8H46.4M57.5 133.7V139.2M57.5 141.2V146.7"/>
</g>
<g stroke-width="1"><circle cx="78.4" cy="170.7" r="5.8"/>
<path d="M77.5 164.9V176.5M79.3 164.9V176.5M72.6 169.8H84.2M72.6 171.6H84.2"/></g>
</g>
<path d="M77.9 164V177.4H78.9V164ZM71.5 170.2H85.3V171.2H71.5Z" fill="#fff"/>
<text x="59.9" y="183.7" font-family="Liberation Sans, sans-serif" font-weight="bold" font-size="15.6" fill="#143d59" stroke="#143d59" stroke-width="1.6" textLength="12.6" lengthAdjust="spacingAndGlyphs">N</text>
<text x="84.6" y="183.7" font-family="Liberation Sans, sans-serif" font-weight="bold" font-size="15.6" fill="#143d59" stroke="#143d59" stroke-width="1.6" textLength="11.8" lengthAdjust="spacingAndGlyphs">P</text>
</svg>
<!-- headers -->
<div class="r " style="left:1px;top:126px;width:996px;height:1px;background:#ababab;"></div>
<div class="r " style="left:26px;top:107px;width:1px;height:741px;background:#ababab;"></div>
<div class="r " style="left:65px;top:107px;width:1px;height:20px;background:#ababab;"></div>
<div class="r " style="left:99px;top:107px;width:1px;height:20px;background:#ababab;"></div>
<div class="r " style="left:314px;top:107px;width:1px;height:20px;background:#ababab;"></div>
<div class="r " style="left:473px;top:107px;width:1px;height:20px;background:#ababab;"></div>
<div class="r " style="left:688px;top:107px;width:1px;height:20px;background:#ababab;"></div>
<div class="r " style="left:856px;top:107px;width:1px;height:20px;background:#ababab;"></div>
<div class="r " style="left:916px;top:107px;width:1px;height:20px;background:#ababab;"></div>
<div class="r " style="left:982px;top:107px;width:1px;height:20px;background:#ababab;"></div>
<div class="r " style="left:857px;top:107px;width:60px;height:19px;background:#d2d2d2;"></div>
<div class="r " style="left:856px;top:125px;width:61px;height:2px;background:#0d6437;"></div>
<svg style="left:11px;top:111px" width="13" height="13"><path d="M12 0V12H0Z" fill="#c4c4c4"/></svg>
<div class="t ui" style="left:41.8978px;top:110.24px;font-size:12.3px;line-height:15px;">A</div>
<div class="t ui" style="left:78.3978px;top:110.24px;font-size:12.3px;line-height:15px;">B</div>
<div class="t ui" style="left:202.559px;top:110.24px;font-size:12.3px;line-height:15px;">C</div>
<div class="t ui" style="left:389.559px;top:110.24px;font-size:12.3px;line-height:15px;">D</div>
<div class="t ui" style="left:576.898px;top:110.24px;font-size:12.3px;line-height:15px;">E</div>
<div class="t ui" style="left:768.243px;top:110.24px;font-size:12.3px;line-height:15px;">F</div>
<div class="t ui" style="left:944.559px;top:110.24px;font-size:12.3px;line-height:15px;">H</div>
<div class="t " style="left:881.716px;top:110.24px;font-size:12.3px;line-height:15px;font-weight:bold;color:#0d6437;">G</div>
<div class="r " style="left:1px;top:146px;width:25px;height:1px;background:#ababab;"></div>
<div class="r " style="left:1px;top:166px;width:25px;height:1px;background:#ababab;"></div>
<div class="r " style="left:1px;top:186px;width:25px;height:1px;background:#ababab;"></div>
<div class="r " style="left:1px;top:207px;width:25px;height:1px;background:#ababab;"></div>
<div class="r " style="left:1px;top:228px;width:25px;height:1px;background:#ababab;"></div>
<div class="r " style="left:1px;top:248px;width:25px;height:1px;background:#ababab;"></div>
<div class="r " style="left:1px;top:268px;width:25px;height:1px;background:#ababab;"></div>
<div class="r " style="left:1px;top:288px;width:25px;height:1px;background:#ababab;"></div>
<div class="r " style="left:1px;top:308px;width:25px;height:1px;background:#ababab;"></div>
<div class="r " style="left:1px;top:328px;width:25px;height:1px;background:#ababab;"></div>
<div class="r " style="left:1px;top:348px;width:25px;height:1px;background:#ababab;"></div>
<div class="r " style="left:1px;top:368px;width:25px;height:1px;background:#ababab;"></div>
<div class="r " style="left:1px;top:388px;width:25px;height:1px;background:#ababab;"></div>
<div class="r " style="left:1px;top:408px;width:25px;height:1px;background:#ababab;"></div>
<div class="r " style="left:1px;top:428px;width:25px;height:1px;background:#ababab;"></div>
<div class="r " style="left:1px;top:448px;width:25px;height:1px;background:#ababab;"></div>
<div class="r " style="left:1px;top:468px;width:25px;height:1px;background:#ababab;"></div>
<div class="r " style="left:1px;top:488px;width:25px;height:1px;background:#ababab;"></div>
<div class="r " style="left:1px;top:508px;width:25px;height:1px;background:#ababab;"></div>
<div class="r " style="left:1px;top:528px;width:25px;height:1px;background:#ababab;"></div>
<div class="r " style="left:1px;top:548px;width:25px;height:1px;background:#ababab;"></div>
<div class="r " style="left:1px;top:568px;width:25px;height:1px;background:#ababab;"></div>
<div class="r " style="left:1px;top:588px;width:25px;height:1px;background:#ababab;"></div>
<div class="r " style="left:1px;top:608px;width:25px;height:1px;background:#ababab;"></div>
<div class="r " style="left:1px;top:628px;width:25px;height:1px;background:#ababab;"></div>
<div class="r " style="left:1px;top:648px;width:25px;height:1px;background:#ababab;"></div>
<div class="r " style="left:1px;top:668px;width:25px;height:1px;background:#ababab;"></div>
<div class="r " style="left:1px;top:688px;width:25px;height:1px;background:#ababab;"></div>
<div class="r " style="left:1px;top:708px;width:25px;height:1px;background:#ababab;"></div>
<div class="r " style="left:1px;top:728px;width:25px;height:1px;background:#ababab;"></div>
<div class="r " style="left:1px;top:748px;width:25px;height:1px;background:#ababab;"></div>
<div class="r " style="left:1px;top:768px;width:25px;height:1px;background:#ababab;"></div>
<div class="r " style="left:1px;top:788px;width:25px;height:1px;background:#ababab;"></div>
<div class="r " style="left:1px;top:808px;width:25px;height:1px;background:#ababab;"></div>
<div class="r " style="left:1px;top:828px;width:25px;height:1px;background:#ababab;"></div>
<div class="r " style="left:1px;top:848px;width:25px;height:1px;background:#ababab;"></div>
<div class="r " style="left:1px;top:229px;width:24px;height:19px;background:#d2d2d2;"></div>
<div class="r " style="left:24px;top:228px;width:2px;height:21px;background:#0d6437;"></div>
<div class="t ui" style="letter-spacing:-0.341px;left:11.05px;top:131.24px;font-size:12.3px;line-height:15px;">1</div>
<div class="t ui" style="letter-spacing:-0.341px;left:11.05px;top:151.24px;font-size:12.3px;line-height:15px;">2</div>
<div class="t ui" style="letter-spacing:-0.341px;left:11.05px;top:171.24px;font-size:12.3px;line-height:15px;">3</div>
<div class="t ui" style="letter-spacing:-0.341px;left:11.05px;top:191.24px;font-size:12.3px;line-height:15px;">4</div>
<div class="t ui" style="letter-spacing:-0.341px;left:11.05px;top:212.24px;font-size:12.3px;line-height:15px;">5</div>
<div class="t " style="left:10.5795px;top:233.24px;font-size:12.3px;line-height:15px;font-weight:bold;color:#0d6437;">6</div>
<div class="t ui" style="letter-spacing:-0.341px;left:11.05px;top:253.24px;font-size:12.3px;line-height:15px;">7</div>
<div class="t ui" style="letter-spacing:-0.341px;left:11.05px;top:273.24px;font-size:12.3px;line-height:15px;">8</div>
<div class="t ui" style="letter-spacing:-0.341px;left:11.05px;top:293.24px;font-size:12.3px;line-height:15px;">9</div>
<div class="t ui" style="letter-spacing:-0.341px;left:7.8px;top:313.24px;font-size:12.3px;line-height:15px;">10</div>
<div class="t ui" style="letter-spacing:0.116px;left:7.8px;top:333.24px;font-size:12.3px;line-height:15px;">11</div>
<div class="t ui" style="letter-spacing:-0.341px;left:7.8px;top:353.24px;font-size:12.3px;line-height:15px;">12</div>
<div class="t ui" style="letter-spacing:-0.341px;left:7.8px;top:373.24px;font-size:12.3px;line-height:15px;">13</div>
<div class="t ui" style="letter-spacing:-0.341px;left:7.8px;top:393.24px;font-size:12.3px;line-height:15px;">14</div>
<div class="t ui" style="letter-spacing:-0.341px;left:7.8px;top:413.24px;font-size:12.3px;line-height:15px;">15</div>
<div class="t ui" style="letter-spacing:-0.341px;left:7.8px;top:433.24px;font-size:12.3px;line-height:15px;">16</div>
<div class="t ui" style="letter-spacing:-0.341px;left:7.8px;top:453.24px;font-size:12.3px;line-height:15px;">17</div>
<div class="t ui" style="letter-spacing:-0.341px;left:7.8px;top:473.24px;font-size:12.3px;line-height:15px;">18</div>
<div class="t ui" style="letter-spacing:-0.341px;left:7.8px;top:493.24px;font-size:12.3px;line-height:15px;">19</div>
<div class="t ui" style="letter-spacing:-0.341px;left:7.8px;top:513.24px;font-size:12.3px;line-height:15px;">20</div>
<div class="t ui" style="letter-spacing:-0.341px;left:7.8px;top:533.24px;font-size:12.3px;line-height:15px;">21</div>
<div class="t ui" style="letter-spacing:-0.341px;left:7.8px;top:553.24px;font-size:12.3px;line-height:15px;">22</div>
<div class="t ui" style="letter-spacing:-0.341px;left:7.8px;top:573.24px;font-size:12.3px;line-height:15px;">23</div>
<div class="t ui" style="letter-spacing:-0.341px;left:7.8px;top:593.24px;font-size:12.3px;line-height:15px;">24</div>
<div class="t ui" style="letter-spacing:-0.341px;left:7.8px;top:613.24px;font-size:12.3px;line-height:15px;">25</div>
<div class="t ui" style="letter-spacing:-0.341px;left:7.8px;top:633.24px;font-size:12.3px;line-height:15px;">26</div>
<div class="t ui" style="letter-spacing:-0.341px;left:7.8px;top:653.24px;font-size:12.3px;line-height:15px;">27</div>
<div class="t ui" style="letter-spacing:-0.341px;left:7.8px;top:673.24px;font-size:12.3px;line-height:15px;">28</div>
<div class="t ui" style="letter-spacing:-0.341px;left:7.8px;top:693.24px;font-size:12.3px;line-height:15px;">29</div>
<div class="t ui" style="letter-spacing:-0.341px;left:7.8px;top:713.24px;font-size:12.3px;line-height:15px;">30</div>
<div class="t ui" style="letter-spacing:-0.341px;left:7.8px;top:733.24px;font-size:12.3px;line-height:15px;">31</div>
<div class="t ui" style="letter-spacing:-0.341px;left:7.8px;top:753.24px;font-size:12.3px;line-height:15px;">32</div>
<div class="t ui" style="letter-spacing:-0.341px;left:7.8px;top:773.24px;font-size:12.3px;line-height:15px;">33</div>
<div class="t ui" style="letter-spacing:-0.341px;left:7.8px;top:793.24px;font-size:12.3px;line-height:15px;">34</div>
<div class="t ui" style="letter-spacing:-0.341px;left:7.8px;top:813.24px;font-size:12.3px;line-height:15px;">35</div>
<div class="t ui" style="letter-spacing:-0.341px;left:7.8px;top:833.24px;font-size:12.3px;line-height:15px;">36</div>
<!-- selection -->
<div class="r" style="left:855px;top:227px;width:59px;height:19px;border:2px solid #0d6437;"></div>
<div class="r " style="left:913px;top:245px;width:6px;height:6px;background:#fff;"></div>
<div class="r " style="left:914px;top:246px;width:5px;height:5px;background:#0d6437;"></div>
<!-- vscroll -->
<div class="r " style="left:1000px;top:109px;width:15px;height:15px;border:1px solid #ababab;background:#fff;box-sizing:border-box;"></div>
<div class="r " style="left:1000px;top:124px;width:15px;height:520px;border:1px solid #ababab;background:#fff;box-sizing:border-box;"></div>
<div class="r " style="left:1000px;top:644px;width:15px;height:189px;background:#d9d9d9;"></div>
<div class="r " style="left:1000px;top:833px;width:15px;height:15px;border:1px solid #ababab;background:#fff;box-sizing:border-box;"></div>
<svg style="left:1004px;top:114px" width="7" height="4"><path d="M0 4L3.5 0L7 4Z" fill="#606060"/></svg>
<svg style="left:1004px;top:839px" width="7" height="4"><path d="M0 0L3.5 4L7 0Z" fill="#606060"/></svg>
<!-- title bar -->
<div class="t ui" style="letter-spacing:-0.445px;left:388px;top:8.71px;font-size:11.8px;line-height:14px;">ENG-0000600.iam_20160218145247.xlsx - Excel</div>
<svg style="left:0;top:0" width="160" height="28" viewBox="0 0 160 28">
<rect x="20.5" y="9" width="6" height="12.5" fill="#fff" stroke="#1e6e41" stroke-width="1"/>
<path d="M21 11.5h5.5M21 14h5.5M21 16.5h5.5M21 19h5.5M23.8 9v12.5" stroke="#1e6e41" stroke-width="0.9" fill="none"/>
<path d="M10.8 9.3L21.2 7.3V23.2L10.8 21.2Z" fill="#1e6e41"/>
<text x="13" y="19.2" font-family="Liberation Sans, sans-serif" font-weight="bold" font-size="10.5" fill="#fff" textLength="6" lengthAdjust="spacingAndGlyphs">X</text>
<path d="M41 8H55V22H41Z" fill="#8749a3"/><path d="M43.2 8H53V14.7H43.2ZM44.2 16.7H52V22H44.2Z" fill="#f1f1f1"/><path d="M46.6 18.6H48.8V22H46.6Z" fill="#8749a3"/>
<g fill="none" stroke="#ababab" stroke-width="2.3">
<path d="M74.6 8.2L70.6 11.8L74.6 15.4"/><path d="M71.5 11.8H78.5C84.5 11.8 85 19 78.3 20.2"/>
<path d="M119.2 8.2L123.2 11.8L119.2 15.4"/><path d="M122.3 11.8H115.3C109.3 11.8 108.8 19 115.5 20.2"/>
</g>
<path d="M90 13H95L92.5 15.8ZM130 13H135L132.5 15.8Z" fill="#b4b4b4"/>
<path d="M148.6 12.8H154.2V14.1H148.6ZM148.6 15.7H154.2L151.4 19.2Z" fill="#444"/>
</svg>
<div class="t " style="left:883px;top:7.67px;font-size:12.5px;line-height:15px;font-weight:bold;color:#5a5a5a;">?</div>
<svg style="left:909px;top:10px" width="13" height="10" viewBox="0 0 13 10"><rect x="0.5" y="0.5" width="12" height="9" fill="none" stroke="#5a5a5a"/><path d="M0.5 2.5H12.5" stroke="#5a5a5a"/><path d="M6.5 8.5V4.5M4.3 6.3L6.5 4.2L8.7 6.3" fill="none" stroke="#5a5a5a" stroke-width="1.1"/></svg>
<div class="r " style="left:940px;top:16px;width:9px;height:2.4px;background:#5a5a5a;"></div>
<svg style="left:969px;top:10px" width="10" height="10"><rect x="0.5" y="0.5" width="9" height="9" fill="none" stroke="#5a5a5a"/><rect x="0" y="0" width="10" height="2.5" fill="#5a5a5a"/></svg>
<svg style="left:998px;top:10px" width="10" height="10"><path d="M0.8 0.8L9.2 9.2M9.2 0.8L0.8 9.2" stroke="#5a5a5a" stroke-width="2.3"/></svg>
<!-- ribbon tabs -->
<div class="r " style="left:1px;top:29px;width:59px;height:25px;background:#0d6437;"></div>
<div class="t " style="letter-spacing:-0.475px;left:14px;top:34.91px;font-size:11.8px;line-height:14px;color:#fff;-webkit-text-stroke:0;">DATEI</div>
<div class="t ui" style="letter-spacing:-0.618px;left:77px;top:34.91px;font-size:11.8px;line-height:14px;">START</div>
<div class="t ui" style="letter-spacing:-0.746px;left:141px;top:34.91px;font-size:11.8px;line-height:14px;">EINFÜGEN</div>
<div class="t ui" style="letter-spacing:-0.58px;left:225px;top:34.91px;font-size:11.8px;line-height:14px;">SEITENLAYOUT</div>
<div class="t ui" style="letter-spacing:-0.528px;left:336px;top:34.91px;font-size:11.8px;line-height:14px;">FORMELN</div>
<div class="t ui" style="letter-spacing:-0.024px;left:418px;top:34.91px;font-size:11.8px;line-height:14px;">DATEN</div>
<div class="t ui" style="letter-spacing:-0.98px;left:486px;top:34.91px;font-size:11.8px;line-height:14px;">ÜBERPRÜFEN</div>
<div class="t ui" style="letter-spacing:-0.256px;left:586px;top:34.91px;font-size:11.8px;line-height:14px;">ANSICHT</div>
<div class="t ui" style="letter-spacing:0.043px;left:665px;top:34.91px;font-size:11.8px;line-height:14px;">VAULT</div>
<div class="t ui" style="letter-spacing:-0.292px;left:901.5px;top:34.17px;font-size:12.5px;line-height:15px;">Timon Först</div>
<svg style="left:972px;top:39px" width="5" height="3"><path d="M0 0H5L2.5 3Z" fill="#777"/></svg>
<div class="r " style="left:983px;top:28px;width:26px;height:26px;background:#fff;"></div>
<svg style="left:984px;top:29px" width="24" height="24" viewBox="0 0 24 24">
<defs><filter id="avb" x="-5%" y="-5%" width="110%" height="110%"><feGaussianBlur stdDeviation="0.45"/></filter><clipPath id="avc"><rect width="24" height="24"/></clipPath></defs>
<g clip-path="url(#avc)"><g filter="url(#avb)">
<rect x="-1" y="-1" width="26" height="26" fill="#c9c7c0"/>
<rect x="-1" y="-1" width="10" height="26" fill="#8f9aab"/>
<rect x="9" y="-1" width="4" height="5" fill="#d6c98f"/>
<rect x="13" y="-1" width="12" height="26" fill="#e3e1db"/>
<rect x="21" y="-1" width="1.4" height="20" fill="#8e979b"/><rect x="23" y="-1" width="1" height="20" fill="#b5b29f"/>
<path d="M15.5 3.5L20 0" stroke="#6b6e70" stroke-width="0.8"/>
<rect x="0" y="8" width="1.8" height="13" fill="#f4f4f4"/>
<rect x="4.2" y="7" width="1.9" height="9" fill="#d9a04e"/>
<rect x="2" y="13" width="2.1" height="7" fill="#2f7fd0"/>
<rect x="0" y="21" width="3.2" height="3.5" fill="#9aa5b0"/>
<path d="M8.5 17.5L3 20V25H9Z" fill="#2b4a6c"/>
<path d="M9.5 17L16.5 15.5L14.5 25H8.5Z" fill="#f2f0f2"/>
<path d="M16.3 15L24.5 19V25H12L14.2 20Z" fill="#15171c"/>
<path d="M9.6 19.5L11.8 19.8L11.3 25H9.2Z" fill="#a3203a"/>
<ellipse cx="12.4" cy="10.3" rx="4.1" ry="5.6" fill="#e6b7a2"/>
<path d="M8.4 12.5C9 16 11 17.8 12.5 17.8C14 17.8 16 16 16.5 12.5Z" fill="#e9c3b2"/>
<path d="M8.1 6.5C8 1.5 16.8 1 17 7C15.5 5.2 10 5.2 8.1 6.5Z" fill="#4a2e20"/>
<path d="M8 9.6H16.6" stroke="#7a5a55" stroke-width="0.8"/>
<path d="M11 14.6H13.6" stroke="#c9707a" stroke-width="0.8"/>
</g></g></svg>
<!-- formula bar -->
<div class="r " style="left:6px;top:71px;width:102px;height:26px;border:1px solid #ababab;background:#fff;box-sizing:border-box;"></div>
<div class="r " style="left:138px;top:71px;width:110px;height:26px;border:1px solid #ababab;background:#fff;box-sizing:border-box;"></div>
<div class="r " style="left:251px;top:71px;width:762px;height:26px;border:1px solid #ababab;background:#fff;box-sizing:border-box;"></div>
<div class="t " style="letter-spacing:-0.087px;left:13px;top:78.17px;font-size:12.5px;line-height:15px;color:#222;">G6</div>
<svg style="left:94px;top:81px" width="8" height="4"><path d="M0 0H8L4 4Z" fill="#555"/></svg>
<div class="r " style="left:122px;top:79px;width:2px;height:2px;background:#666;"></div>
<div class="r " style="left:122px;top:83.1px;width:2px;height:2px;background:#666;"></div>
<div class="r " style="left:122px;top:87.2px;width:2px;height:2px;background:#666;"></div>
<svg style="left:148px;top:76px" width="17" height="16"><path d="M1 1L16 15M16 1L1 15" stroke="#a6a6a6" stroke-width="2.4"/></svg>
<svg style="left:183px;top:76px" width="21" height="17"><path d="M1.2 9.8L6.8 15L19.8 1.8" fill="none" stroke="#a6a6a6" stroke-width="3.2"/></svg>
<svg style="left:210px;top:66px" width="40" height="36" viewBox="210 66 40 36"><g font-family="Liberation Serif, serif" font-style="italic" fill="#555" stroke="#555" stroke-width="0.45"><text x="222.3" y="91" font-size="25">f</text><text x="228.2" y="91" font-size="18.5">x</text></g></svg>
<div class="t " style="letter-spacing:0.044px;left:263px;top:78.17px;font-size:12.5px;line-height:15px;color:#222;">61,71</div>
<svg style="left:998px;top:81px" width="13" height="9"><path d="M1 1L6.5 7L12 1" fill="none" stroke="#555" stroke-width="3"/></svg>
<!-- sheet tabs -->
<div class="r " style="left:1px;top:848px;width:1016px;height:27px;background:#f1f1f1;"></div>
<div class="r " style="left:1px;top:847px;width:996px;height:1px;background:#ababab;"></div>
<svg style="left:28px;top:856px" width="5" height="9"><path d="M5 0V9L0 4.5Z" fill="#b5b5b5"/></svg>
<svg style="left:56px;top:856px" width="5" height="9"><path d="M0 0V9L5 4.5Z" fill="#b5b5b5"/></svg>
<div class="r " style="left:101px;top:847px;width:95px;height:23px;background:#fff;"></div>
<div class="r " style="left:101px;top:869px;width:95px;height:2px;background:#0d6437;"></div>
<div class="t " style="letter-spacing:-0.188px;left:113px;top:853px;font-size:13px;line-height:16px;font-weight:bold;color:#0d6437;">Stückliste 1</div>
<div class="t ui" style="letter-spacing:-0.248px;left:210px;top:853px;font-size:13px;line-height:16px;">Stückliste 2</div>
<div class="t ui" style="letter-spacing:-0.248px;left:304px;top:853px;font-size:13px;line-height:16px;">Stückliste 3</div>
<div class="r " style="left:289px;top:851px;width:1px;height:20px;background:#ababab;"></div>
<div class="r " style="left:382px;top:851px;width:1px;height:20px;background:#ababab;"></div>
<svg style="left:415px;top:853px" width="17" height="17"><circle cx="8.5" cy="8.5" r="7.3" fill="none" stroke="#666" stroke-width="1.2"/><path d="M4.5 8.5H12.5M8.5 4.5V12.5" stroke="#555" stroke-width="1.8"/></svg>
<div class="r " style="left:611px;top:856.5px;width:2px;height:2px;background:#666;"></div>
<div class="r " style="left:611px;top:860px;width:2px;height:2px;background:#666;"></div>
<div class="r " style="left:611px;top:863.5px;width:2px;height:2px;background:#666;"></div>
<div class="r " style="left:628px;top:854px;width:15px;height:15px;border:1px solid #ababab;background:#fff;box-sizing:border-box;"></div>
<div class="r " style="left:643px;top:854px;width:263px;height:15px;border:1px solid #ababab;background:#fff;box-sizing:border-box;"></div>
<div class="r " style="left:906px;top:854px;width:76px;height:15px;background:#d9d9d9;"></div>
<div class="r " style="left:982px;top:854px;width:15px;height:15px;border:1px solid #ababab;background:#fff;box-sizing:border-box;"></div>
<svg style="left:633px;top:858px" width="4" height="7"><path d="M4 0V7L0 3.5Z" fill="#606060"/></svg>
<svg style="left:988px;top:858px" width="4" height="7"><path d="M0 0V7L4 3.5Z" fill="#606060"/></svg>
<!-- status bar -->
<div class="r " style="left:0px;top:875px;width:1019px;height:23px;background:#0d6437;"></div>
<div class="t " style="letter-spacing:-0.594px;left:8.5px;top:880.2px;font-size:10.4px;line-height:12px;color:#fff;-webkit-text-stroke:0;">BEREIT</div>
<svg style="left:62px;top:879px" width="14" height="14" viewBox="62 879 14 14"><path d="M69 880H75V883H69ZM74 883H75V892H74ZM63 891H75V892H63ZM63 886H64V891H63Z" fill="#fff"/><path d="M68 885h2v1h-2zM71 885h2v1h-2zM65 887h2v1h-2zM68 887h2v1h-2zM71 887h2v1h-2zM65 889h2v1h-2zM68 889h2v1h-2zM71 889h2v1h-2z" fill="#fff"/><circle cx="64.9" cy="881.9" r="2.9" fill="#e6eee8"/></svg>
<div class="r " style="left:712px;top:876px;width:38px;height:22px;background:#0a4a28;"></div>
<svg style="left:724px;top:879px" width="13" height="13"><rect x="0.5" y="0.5" width="12" height="12" fill="none" stroke="#fff" stroke-width="1"/><path d="M4.5 0V13M8.5 0V13M0 4.5H13M0 8.5H13" stroke="#fff" stroke-width="1"/></svg>
<svg style="left:762px;top:879px" width="14" height="13"><rect x="0.5" y="0.5" width="13" height="12" fill="none" stroke="#fff" stroke-width="1"/><rect x="3.5" y="2.5" width="7" height="8" fill="none" stroke="#fff" stroke-width="1"/><path d="M5 4.5H9M5 6.5H9M5 8.5H9" stroke="#fff" stroke-width="1"/></svg>
<svg style="left:800px;top:879px" width="14" height="13"><rect x="0.5" y="0.5" width="13" height="12" fill="none" stroke="#fff" stroke-width="1"/><rect x="1" y="1" width="3.5" height="6.5" fill="#e8f0ea"/><rect x="5.5" y="1" width="3" height="6.5" fill="#e8f0ea"/></svg>
<div class="r " style="left:831px;top:885px;width:6px;height:2px;background:#fff;"></div>
<div class="r " style="left:841px;top:885.5px;width:100px;height:1px;background:#fff;"></div>
<div class="r " style="left:889px;top:880px;width:4px;height:11px;background:#fff;"></div>
<div class="r " style="left:945px;top:885px;width:9px;height:2px;background:#fff;"></div>
<div class="r " style="left:948.5px;top:881.5px;width:2px;height:9px;background:#fff;"></div>
<div class="t " style="letter-spacing:0.002px;left:968.5px;top:880.2px;font-size:10.4px;line-height:12px;color:#fff;-webkit-text-stroke:0;">100 %</div>
<!-- window border -->
<div class="r " style="left:0px;top:0px;width:1019px;height:1px;background:#075a27;"></div>
<div class="r " style="left:0px;top:0px;width:1px;height:898px;background:#075a27;"></div>
<div class="r " style="left:1018px;top:0px;width:1px;height:898px;background:#075a27;"></div>
<div class="r " style="left:0px;top:875px;width:1019px;height:1px;background:#075a27;"></div>
<div class="r " style="left:1px;top:1px;width:1017px;height:1px;background:#fff;"></div>
<div class="r " style="left:1px;top:1px;width:1px;height:874px;background:#fff;"></div>
<div class="r " style="left:1017px;top:1px;width:1px;height:874px;background:#fff;"></div>
<div class="r " style="left:1px;top:874px;width:1017px;height:1px;background:#fff;"></div>
<div class="r " style="left:1px;top:28px;width:59px;height:1px;background:#fff;"></div>
<div class="r " style="left:1px;top:29px;width:1px;height:25px;background:#0d6437;"></div>
<!-- badges -->
<div class="t" style="left:300.2px;top:70.5px;width:28.6px;height:28.6px;border-radius:50%;background:radial-gradient(circle closest-side,rgba(190,123,68,0.9) 84%,#f0a566 89%,#f0a566 97%,rgba(240,165,102,0) 100%);box-shadow:4px 5px 9px 1px rgba(0,0,0,0.6);color:#fff;font-size:16.5px;line-height:27.5px;text-align:center;-webkit-text-stroke:0;">2</div>
<div class="t" style="left:552.7px;top:141.9px;width:28.6px;height:28.6px;border-radius:50%;background:radial-gradient(circle closest-side,rgba(190,123,68,0.9) 84%,#f0a566 89%,#f0a566 97%,rgba(240,165,102,0) 100%);box-shadow:4px 5px 9px 1px rgba(0,0,0,0.6);color:#fff;font-size:16.5px;line-height:27.5px;text-align:center;-webkit-text-stroke:0;">1</div>
<div class="t" style="left:665.7px;top:217.9px;width:28.6px;height:28.6px;border-radius:50%;background:radial-gradient(circle closest-side,rgba(190,123,68,0.9) 84%,#f0a566 89%,#f0a566 97%,rgba(240,165,102,0) 100%);box-shadow:4px 5px 9px 1px rgba(0,0,0,0.6);color:#fff;font-size:16.5px;line-height:27.5px;text-align:center;-webkit-text-stroke:0;">3</div>
<div class="t" style="left:881.7px;top:217.8px;width:28.6px;height:28.6px;border-radius:50%;background:radial-gradient(circle closest-side,rgba(190,123,68,0.9) 84%,#f0a566 89%,#f0a566 97%,rgba(240,165,102,0) 100%);box-shadow:4px 5px 9px 1px rgba(0,0,0,0.6);color:#fff;font-size:16.5px;line-height:27.5px;text-align:center;-webkit-text-stroke:0;">2</div>
</body></html>
